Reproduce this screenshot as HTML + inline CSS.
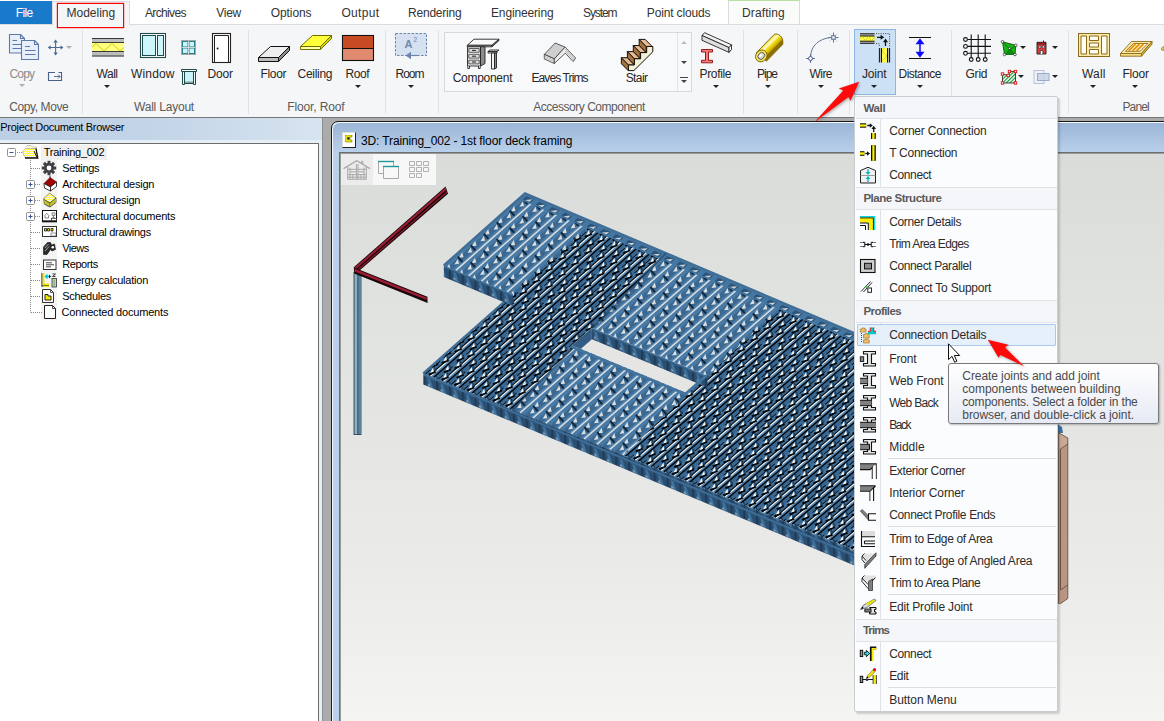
<!DOCTYPE html>
<html lang="en"><head><meta charset="utf-8"><title>Vertex BD - Joint menu</title>
<style>
*{box-sizing:border-box;margin:0;padding:0}
html,body{width:1164px;height:721px;overflow:hidden;background:#fff}
body{position:relative;font-family:"Liberation Sans",sans-serif;font-size:12px;color:#2b2b2b}
.a{position:absolute}
.t{position:absolute;white-space:nowrap;line-height:14px;height:14px}
.c{text-align:center}
#tabs{left:0;top:0;width:1164px;height:24px;background:#fff}
#ribbon{left:0;top:24px;width:1164px;height:93px;background:#f5f6f7;border-top:1px solid #dadbdc}
.tab{position:absolute;top:6px;font-size:12px;line-height:14px;color:#333;white-space:nowrap;letter-spacing:.05px}
.sep{position:absolute;top:30px;width:1px;height:84px;background:#e1e2e3}
.lbl{position:absolute;top:67px;font-size:12px;line-height:14px;color:#262626;white-space:nowrap;text-align:center;letter-spacing:-.1px}
.grp{position:absolute;top:100px;font-size:12px;line-height:14px;color:#5a5a5a;white-space:nowrap;text-align:center;letter-spacing:-.3px}
.dd{position:absolute;width:0;height:0;border-left:3px solid transparent;border-right:3px solid transparent;border-top:3px solid #222}
.tree{position:absolute;font-size:11px;line-height:16px;height:16px;white-space:nowrap;color:#000;letter-spacing:-.2px}
.mi{position:absolute;left:35px;font-size:12px;line-height:14px;color:#2b2b2b;white-space:nowrap;letter-spacing:-.2px}
.mh{position:absolute;left:1px;width:201px;height:23px;background:#f4f6f9;border-bottom:1px solid #dfe2e6;border-top:1px solid #dfe2e6;font-weight:bold;font-size:11.5px;line-height:21px;padding-left:8px;color:#555;letter-spacing:-.35px}
.ms{position:absolute;left:33px;width:168px;height:1px;background:#d9dce0}
.mht{position:absolute;font-weight:bold;font-size:11.5px;line-height:14px;color:#5a5a5a;white-space:nowrap}
.tt{position:absolute;font-size:12px;line-height:14px;color:#4a4a4a;white-space:nowrap}

</style></head><body>
<!-- ===== tabs + ribbon ===== -->
<div class="a" id="tabs"></div><div class="a" id="ribbon"></div>
<div class="a" style="left:0;top:1px;width:52px;height:23px;background:#1979ca"></div>
<div class="a" style="left:52px;top:1px;width:78px;height:24px;background:#f5f6f7;border:1px solid #dadbdc;border-bottom:none"></div>
<div class="a" style="left:57px;top:3px;width:67px;height:25px;border:1px solid #ff0000;box-shadow:0 0 0 .2px #ff0000"></div>
<div class="a" style="left:728px;top:0;width:72px;height:24px;border:1px solid #dadbdc;border-bottom:none;border-top:1px solid #b9e2a0;background:#fafcf9"></div>
<div class="sep" style="left:82px"></div><div class="sep" style="left:248px"></div><div class="sep" style="left:385px"></div>
<div class="sep" style="left:438px"></div><div class="sep" style="left:743px"></div><div class="sep" style="left:797px"></div>
<div class="sep" style="left:849px"></div><div class="sep" style="left:951px"></div><div class="sep" style="left:1068px"></div>
<!-- gallery box -->
<div class="a" style="left:444px;top:32px;width:248px;height:60px;background:#f8f9fa;border:1px solid #d8d9da"></div>
<div class="a" style="left:677px;top:33px;width:1px;height:58px;background:#e2e3e5"></div>
<!-- joint highlight -->
<div class="a" style="left:854px;top:29px;width:42px;height:66px;background:#cde1f6;border:1px solid #8fb6e2"></div>
<!-- labels -->
<!-- tab / ribbon text -->
<div class="tab" style="left:15.8px;top:6px;letter-spacing:-0.648px;color:#fff">File</div>
<div class="tab" style="left:66.5px;top:6px;letter-spacing:-0.000px;">Modeling</div>
<div class="tab" style="left:145px;top:6px;letter-spacing:-0.645px;">Archives</div>
<div class="tab" style="left:216.3px;top:6px;letter-spacing:-0.299px;">View</div>
<div class="tab" style="left:270.7px;top:6px;letter-spacing:-0.077px;">Options</div>
<div class="tab" style="left:341.4px;top:6px;letter-spacing:0.314px;">Output</div>
<div class="tab" style="left:408.1px;top:6px;letter-spacing:-0.234px;">Rendering</div>
<div class="tab" style="left:491px;top:6px;letter-spacing:-0.146px;">Engineering</div>
<div class="tab" style="left:583px;top:6px;letter-spacing:-1.083px;">System</div>
<div class="tab" style="left:646.8px;top:6px;letter-spacing:-0.152px;">Point clouds</div>
<div class="tab" style="left:742.1px;top:6px;letter-spacing:0.096px;">Drafting</div>
<div class="lbl" style="left:9.5px;top:67px;letter-spacing:-0.839px;color:#8c8c8c">Copy</div>
<div class="lbl" style="left:96.5px;top:67px;letter-spacing:-0.464px;">Wall</div>
<div class="lbl" style="left:131px;top:67px;letter-spacing:0.163px;">Window</div>
<div class="lbl" style="left:207.5px;top:67px;letter-spacing:-0.172px;">Door</div>
<div class="lbl" style="left:260.5px;top:67px;letter-spacing:-0.336px;">Floor</div>
<div class="lbl" style="left:297.5px;top:67px;letter-spacing:-0.281px;">Ceiling</div>
<div class="lbl" style="left:345.5px;top:67px;letter-spacing:-0.453px;">Roof</div>
<div class="lbl" style="left:395.5px;top:67px;letter-spacing:-1.005px;">Room</div>
<div class="lbl" style="left:452.7px;top:71px;letter-spacing:-0.281px;">Component</div>
<div class="lbl" style="left:531.5px;top:71px;letter-spacing:-0.902px;">Eaves Trims</div>
<div class="lbl" style="left:625.7px;top:71px;letter-spacing:-0.597px;">Stair</div>
<div class="lbl" style="left:699.5px;top:67px;letter-spacing:-0.336px;">Profile</div>
<div class="lbl" style="left:757px;top:67px;letter-spacing:-1.010px;">Pipe</div>
<div class="lbl" style="left:809.5px;top:67px;letter-spacing:-0.557px;">Wire</div>
<div class="lbl" style="left:862px;top:67px;letter-spacing:-0.215px;">Joint</div>
<div class="lbl" style="left:898.5px;top:67px;letter-spacing:-0.527px;">Distance</div>
<div class="lbl" style="left:965.5px;top:67px;letter-spacing:-0.224px;">Grid</div>
<div class="lbl" style="left:1082px;top:67px;letter-spacing:0.203px;">Wall</div>
<div class="lbl" style="left:1122.5px;top:67px;letter-spacing:-0.211px;">Floor</div>
<div class="grp" style="left:9.3px;top:100px;letter-spacing:-0.416px;">Copy, Move</div>
<div class="grp" style="left:134px;top:100px;letter-spacing:-0.205px;">Wall Layout</div>
<div class="grp" style="left:287.3px;top:100px;letter-spacing:-0.130px;">Floor, Roof</div>
<div class="grp" style="left:533.3px;top:100px;letter-spacing:-0.480px;">Accessory Component</div>
<div class="grp" style="left:1122.5px;top:100px;letter-spacing:-0.901px;">Panel</div>
<!-- dropdown arrows -->
<div class="dd" style="left:19px;top:84px;border-top-color:#b0b0b0"></div>
<div class="dd" style="left:104px;top:85px"></div>
<div class="dd" style="left:355px;top:85px"></div>
<div class="dd" style="left:408px;top:85px"></div>
<div class="dd" style="left:713px;top:85px"></div>
<div class="dd" style="left:765px;top:85px"></div>
<div class="dd" style="left:818px;top:85px"></div>
<div class="dd" style="left:871px;top:85px"></div>
<div class="dd" style="left:917px;top:85px"></div>
<div class="dd" style="left:1090px;top:85px"></div>
<div class="dd" style="left:1132px;top:85px"></div>
<div class="dd" style="left:66px;top:46px;border-top-color:#b0b0b0"></div>
<div class="dd" style="left:1020px;top:46px"></div><div class="dd" style="left:1052px;top:46px"></div>
<div class="dd" style="left:1018px;top:75px"></div><div class="dd" style="left:1052px;top:75px"></div>
<!-- gallery scroll arrows -->
<div class="dd" style="left:681px;top:41px;border-top:none;border-bottom:3px solid #bdbdbd"></div>
<div class="dd" style="left:681px;top:61px;border-top-color:#444"></div>
<div class="a" style="left:680px;top:77px;width:8px;height:1px;background:#444"></div>
<div class="dd" style="left:681px;top:80px;border-top-color:#444"></div>
<!-- ribbon icons -->
<svg class="a" style="left:0;top:26px" width="1164" height="70" viewBox="0 26 1164 70">
<!-- copy -->
<g fill="#e7effb" stroke="#5f78a8" stroke-width="1.1" stroke-linejoin="round">
<path d="M9.5 34.5H20.5L24.5 38.5V53H9.5Z"/><path d="M20.5 34.5V38.5H24.5" fill="none"/>
<path d="M21.5 40.5H34.5L38.5 44.5V59.5H21.5Z"/><path d="M34.5 40.5V44.5H38.5" fill="none"/>
<path d="M12.5 40.5H17M12.5 44.5H21M12.5 48.5H21M25 46.5H30M25 50.5H35.5M25 54.5H35.5" fill="none"/>
</g>
<!-- move -->
<g fill="#4c6a94" stroke="#4c6a94" stroke-width="1.1"><path d="M55.6 41V54M49 47.5H62.2" fill="none"/><path d="M55.6 39.6L53.4 42.4H57.8ZM55.6 55.4L53.4 52.6H57.8ZM47.8 47.5L50.6 45.3V49.7ZM63.4 47.5L60.6 45.3V49.7Z" stroke="none"/></g>
<g fill="none" stroke="#44608c" stroke-width="1.1"><path d="M55 72.5H48.5V80.500H61.5V72.500H58.500"/><path d="M54 76.500H60M58 74.500L60 76.500L58 78.500" stroke-width=".9"/></g>
<!-- wall -->
<rect x="92" y="38" width="32" height="18.500" fill="#bcbcbc"/><rect x="92" y="43" width="32" height="8.500" fill="#ffff80"/>
<path d="M92 38.500H124M92 42.500H124M92 51.500H124M92 56H124" stroke="#3a3a3a" stroke-width="1" fill="none"/>
<path d="M92 47L96 43.500L104 51L112 43.500L120 51L124 47.500" stroke="#c9c900" stroke-width=".9" fill="none"/>
<!-- window -->
<rect x="140.500" y="33.500" width="25" height="24" fill="#fff" stroke="#1f4b4b" stroke-width="1.100"/>
<rect x="142.500" y="35.500" width="13" height="20" fill="#cdf6fc" stroke="#1f4b4b" stroke-width="1"/>
<rect x="157.500" y="35.500" width="6" height="20" fill="#cdf6fc" stroke="#1f4b4b" stroke-width="1"/>
<!-- small window 4 -->
<rect x="181.500" y="40.500" width="14" height="14" fill="#2b7f88" stroke="#a8a8a8" stroke-width="1"/>
<path d="M183 42h4.500v4.500h-4.500zM189.500 42h4.500v4.500h-4.500zM183 48.500h4.500v4.500h-4.500zM189.500 48.500h4.500v4.500h-4.500z" fill="#c8f4fa"/>
<path d="M188.500 41V54M182 47.500H195" stroke="#f0f0f0" stroke-width=".8"/>
<!-- small window bottom -->
<path d="M181.500 69.500H196.500V71.500H181.500Z" fill="#fff" stroke="#1f4b4b" stroke-width="1"/>
<path d="M182.500 71.500V84.500H184.500V71.500M193.500 71.500V84.500H195.500V71.500M184.500 82H193.500M184.500 83.500H193.500" fill="none" stroke="#1f4b4b" stroke-width="1"/>
<rect x="185" y="72" width="8" height="9.500" fill="#c8f4fa"/>
<!-- door -->
<rect x="212.500" y="33.500" width="18" height="29" fill="#fff" stroke="#222" stroke-width="1.100"/>
<path d="M214.500 62.500V35.500H228.500V62.500" fill="none" stroke="#222" stroke-width="1"/><circle cx="217.600" cy="48.600" r="1" fill="#222"/>
<!-- floor -->
<path d="M258.500 57.500L270.500 46.500H289.500L278.500 57.500Z" fill="#eeeeee" stroke="#111" stroke-width="1"/>
<path d="M258.500 57.500H278.500V61.500H258.500Z" fill="#bdbdbd" stroke="#111" stroke-width="1"/>
<path d="M278.500 57.500L289.500 46.500V50.500L278.500 61.500Z" fill="#8a8a8a" stroke="#111" stroke-width="1"/>
<!-- ceiling -->
<path d="M300.500 46.500L312.500 35.500H331.500L320.500 46.500Z" fill="#ffff3a" stroke="#6e6e00" stroke-width="1"/>
<path d="M300.500 46.500H320.500V49.500H300.500Z" fill="#ffffa8" stroke="#6e6e00" stroke-width="1"/>
<path d="M320.500 46.500L331.500 35.500V38.500L320.500 49.500Z" fill="#d8d800" stroke="#6e6e00" stroke-width="1"/>
<!-- roof -->
<rect x="342.500" y="35.500" width="31" height="25" fill="#e08a70" stroke="#111" stroke-width="1.100"/><rect x="343" y="36" width="30" height="12" fill="#c84a24"/><path d="M342.500 48.500H373.500" stroke="#111" stroke-width="1"/>
<!-- room -->
<rect x="395.500" y="33.500" width="31" height="22" fill="#d5e0f0" stroke="#6c84ad" stroke-width="1" stroke-dasharray="2.500 1.500"/>
<path d="M418 55.500H411" stroke="#6c84ad" stroke-width="1.200"/><path d="M405.500 55.500L411 51.800V59.200Z" fill="#6c84ad"/>
<text x="404.500" y="48" font-family="Liberation Sans, sans-serif" font-size="11" font-weight="bold" fill="#7088b0">A</text>
<text x="413.500" y="42" font-family="Liberation Sans, sans-serif" font-size="6.500" fill="#7088b0">2</text>
<!-- component (desk) -->
<g stroke="#222" stroke-width=".9" stroke-linejoin="round">
<path d="M467.300 45.300L474 39.200H499L492 45.300Z" fill="#fafafa"/><path d="M467.300 45.300H492V46.800H467.300Z" fill="#e0e0e0"/><path d="M492 45.300L499 39.200V40.600L492 46.800Z" fill="#999"/>
<path d="M467.500 46.800H480.500V66H467.500Z" fill="#f4f4f4"/><path d="M480.500 46.800H485V63.500L480.500 66Z" fill="#8c8c8c"/>
<path d="M468.800 48.500H479.200V52.300H468.800ZM468.800 54.300H479.200V58.100H468.800ZM468.800 60.100H479.200V63.900H468.800Z" fill="#dcdcdc" stroke-width=".7"/>
<path d="M472 50.400H476M472 56.200H476M472 62H476" stroke-width="1"/>
<path d="M467.800 66V68.500H469.500V66M478.500 66V68.500H480.200V66" fill="#fff"/>
<path d="M488 51.500L490 50H499L497 51.500Z" fill="#fafafa"/><path d="M488 51.500H497V53H488Z" fill="#ddd"/>
<path d="M491.500 53H494.500V69H491.500Z" fill="#f4f4f4"/><path d="M494.500 53H496.500V68L494.500 69Z" fill="#8c8c8c"/>
</g>
<!-- eaves trims -->
<g stroke="#333" stroke-width=".8" stroke-linejoin="round">
<path d="M544.300 54.400L555.200 43L565.100 47.100L554.300 58.900Z" fill="#cfcfcf"/>
<path d="M544.300 54.400L554.300 58.900V63.500L544.300 59Z" fill="#f4f4f4"/>
<path d="M544.300 56L554.300 60.500M544.300 57.500L554.300 62" stroke="#999" stroke-width=".6"/>
<path d="M565.100 47.100L575.600 58L573.200 61.600L565.300 53.200L554.300 63.500V58.900Z" fill="#ececec"/>
<path d="M565.200 49L574.800 59.200M565.300 51L574 60.300" stroke="#999" stroke-width=".6" fill="none"/>
</g>
<!-- stair -->
<g stroke="#1a0f08" stroke-width="1" stroke-linejoin="round">
<path d="M628.4 64.8L628.4 70.6L633.9 70.6L652.8 51.8L652.8 46.5L646.7 46.5L646.7 52.6L640.6 52.6L640.6 58.7L634.5 58.7L634.5 64.8Z" fill="#f1f0da"/>
<path d="M621.4 57.7L628.4 64.8L628.4 70.8L621.4 63.7Z" fill="#a4723f"/>
<path d="M621.4 57.7L627.4 57.7L634.3 64.8L628.4 64.8Z" fill="#e2bb95"/>
<path d="M627.4 51.6L634.3 58.6L634.3 64.7L627.4 57.6Z" fill="#a4723f"/>
<path d="M627.4 51.6L633.3 51.6L640.3 58.6L634.3 58.6Z" fill="#e2bb95"/>
<path d="M633.3 45.5L640.2 52.5L640.2 58.5L633.3 51.5Z" fill="#a4723f"/>
<path d="M633.3 45.5L639.2 45.5L646.2 52.5L640.2 52.5Z" fill="#e2bb95"/>
<path d="M639.2 39.4L646.2 46.5L646.2 52.5L639.2 45.4Z" fill="#a4723f"/>
<path d="M639.2 39.4L645.2 39.4L652.2 46.5L646.2 46.5Z" fill="#e2bb95"/>
</g>
<!-- profile -->
<g stroke="#222" stroke-width=".9" stroke-linejoin="round">
<path d="M702 35.500L704.500 32.700L731.500 44.800L729 47.600Z" fill="#f2f2f2"/><path d="M702 35.500L729 47.600V52.400L702 40.300Z" fill="#dedede"/><path d="M729 47.600L731.500 44.800V49.600L729 52.400Z" fill="#fff"/>
<path d="M701.500 49.500H712.500V52H708.500V60.300H712.500V62.800H701.500V60.300H705.500V52H701.500Z" fill="#f47c7c" stroke="#8a0a0a"/>
</g>
<!-- pipe -->
<defs><linearGradient id="pg" gradientUnits="userSpaceOnUse" x1="764" y1="41" x2="773" y2="50"><stop offset="0" stop-color="#b89a00"/><stop offset=".2" stop-color="#f4dc10"/><stop offset=".45" stop-color="#fffbe0"/><stop offset=".62" stop-color="#f6de18"/><stop offset=".85" stop-color="#d8b800"/><stop offset="1" stop-color="#8a7000"/></linearGradient></defs>
<path d="M756.200 52.900L774.200 34.400C777.500 32.800 783.800 36 782.800 44.300L766.500 61.100Z" fill="url(#pg)" stroke="#7a6400" stroke-width=".9"/>
<ellipse cx="761.300" cy="55.900" rx="5.400" ry="6.200" transform="rotate(42 761.300 55.900)" fill="#f8e860" stroke="#7a6400" stroke-width=".9"/>
<ellipse cx="761.300" cy="55.900" rx="3" ry="3.700" transform="rotate(42 761.300 55.900)" fill="#d8d8d8" stroke="#444" stroke-width=".8"/>
<ellipse cx="760.600" cy="55.300" rx="1.200" ry="1.800" transform="rotate(42 760.600 55.300)" fill="#fff"/>
<!-- wire -->
<g fill="none" stroke="#5f7398" stroke-width="1"><path d="M810.700 56.400C810.700 46 819 38.500 831 37.500"/>
<path d="M810.500 54V63M806 58.500H815" stroke-width="1"/><rect x="808.700" y="56.700" width="3.600" height="3.600" fill="#fdfdfe" transform="rotate(45 810.500 58.500)"/>
<path d="M829.500 33.500L837.500 41.500M837.500 33.500L829.500 41.500" stroke="#b8c4d8" stroke-width=".7"/><path d="M833.500 32.500V42.500M828.500 37.500H838.500" stroke-width="1"/><rect x="831.700" y="35.700" width="3.600" height="3.600" fill="#e4ebf6"/></g>
<!-- joint -->
<rect x="860" y="33.500" width="14.500" height="10" fill="#b8b8b8"/><rect x="860" y="36.200" width="14.500" height="4.800" fill="#ffff50"/>
<path d="M860 33.800H874.500M860 36H874.500M860 41.200H874.500M860 43.300H874.500" stroke="#111" stroke-width="1"/>
<path d="M860 38.600L862.400 36.400L865.400 41L868.400 36.400L871.400 41L874.500 37" stroke="#c4c400" stroke-width=".7" fill="none"/>
<rect x="879" y="48" width="11" height="14.500" fill="#b8b8b8"/><rect x="881.700" y="48" width="5.600" height="14.500" fill="#ffff50"/>
<path d="M879.400 48V62.500M881.500 48V62.500M887.500 48V62.500M889.600 48V62.500" stroke="#111" stroke-width="1"/>
<path d="M884.500 48L882 51L887 56L882 61" stroke="#c4c400" stroke-width=".7" fill="none"/>
<path d="M876 33.600H889.600V47M876 43.600H879.300V46.500" fill="none" stroke="#333" stroke-width=".9" stroke-dasharray="1 1.300"/>
<path d="M877 37.300H882M885.500 46V41" stroke="#111" stroke-width="1.300"/><path d="M884.200 37.300L880.600 34.800V39.800ZM885.500 38.600L883 42.200H888Z" fill="#111"/>
<!-- distance -->
<path d="M909 37.500H931M909 58.500H931" stroke="#111" stroke-width="1.100"/><path d="M920 42V54" stroke="#0a0aff" stroke-width="1.500"/><path d="M920 38.300L915.600 44.200H924.400ZM920 57.700L915.600 51.800H924.400Z" fill="#0a0aff"/>
<!-- grid -->
<g stroke="#111" stroke-width="1.100" fill="#f5f6f7"><path d="M971.200 34.500V57.500M978.200 34.500V57.500M985.200 34.500V57.500M967.500 39.500H991M967.500 46.400H991M967.500 53.300H991" fill="none"/>
<circle cx="971.200" cy="59.500" r="1.900"/><circle cx="978.200" cy="59.500" r="1.900"/><circle cx="985.200" cy="59.500" r="1.900"/><circle cx="965.500" cy="39.500" r="1.900"/><circle cx="965.500" cy="46.400" r="1.900"/><circle cx="965.500" cy="53.300" r="1.900"/></g>
<!-- green shape -->
<path d="M1002.500 41.800L1015.800 45.300L1015 54.500L1004.500 54.500Z" fill="#16b416" stroke="#0a5a0a" stroke-width=".9"/><path d="M1002.500 41.800L1015 54.500M1015.800 45.300L1004.500 54.500" stroke="#0a5a0a" stroke-width=".7"/><path d="M1004.500 54.500L1009.500 48.500L1015 54.500Z" fill="#0c8a0c"/>
<g fill="#fff" stroke="#222" stroke-width=".7"><circle cx="1002.500" cy="41.800" r="1.300"/><circle cx="1015.800" cy="45.300" r="1.300"/><circle cx="1015" cy="54.500" r="1.300"/><circle cx="1004.500" cy="54.500" r="1.300"/><circle cx="1009.500" cy="48.300" r="1.100"/></g>
<!-- red building -->
<path d="M1037 44H1046V54H1037Z" fill="#dc4040" stroke="#1a1a1a" stroke-width=".9"/><path d="M1037 44V42.300H1046V44" fill="#b01818" stroke="#1a1a1a" stroke-width=".9"/><path d="M1043.500 42V40.500" stroke="#1a1a1a"/>
<path d="M1038.800 46h2v2h-2zM1042.300 46h2v2h-2z" fill="#fff" stroke="#1a1a1a" stroke-width=".5"/><path d="M1040.300 54V50.500H1042.800V54" fill="#fff" stroke="#1a1a1a" stroke-width=".6"/>
<!-- hatched -->
<defs><pattern id="hh" width="2.600" height="2.600" patternUnits="userSpaceOnUse" patternTransform="rotate(-45)"><rect width="2.600" height="2.600" fill="#fff"/><rect width="2.600" height="1.200" fill="#1a9a3a"/></pattern></defs>
<path d="M1002.500 74L1008.500 75.500L1009.500 71.500L1015.500 71.500V83H1002.500Z" fill="url(#hh)" stroke="#1a1a1a" stroke-width=".8"/>
<g fill="#fff" stroke="#e01010" stroke-width=".9"><rect x="1001.300" y="72.800" width="2.400" height="2.400"/><rect x="1008.300" y="70.300" width="2.400" height="2.400"/><rect x="1014.300" y="70.300" width="2.400" height="2.400"/><rect x="1014.300" y="81.800" width="2.400" height="2.400"/><rect x="1001.300" y="81.800" width="2.400" height="2.400"/><rect x="1007" y="74.300" width="2.400" height="2.400"/></g>
<!-- overlap rects -->
<rect x="1034" y="70.500" width="10" height="13" fill="#eef2f8" stroke="#b5c2d8" stroke-width="1"/><rect x="1037.500" y="73.500" width="11.500" height="7" fill="#c5d3e8" stroke="#9aaccc" stroke-width="1" fill-opacity=".85"/>
<!-- panel wall -->
<g fill="#fdeaa8" stroke="#8a6a1c" stroke-width="1"><rect x="1078.500" y="33.500" width="31" height="23"/><path d="M1081 36H1086.500V54H1081ZM1101.500 36H1107V54H1101.500ZM1089.500 36H1098.500V40.500H1089.500ZM1089.500 43H1098.500V47H1089.500ZM1089.500 49.500H1098.500V54H1089.500Z" fill="#fffdf4"/></g>
<!-- panel floor -->
<g stroke="#8a6a1c" stroke-width=".9" stroke-linejoin="round"><path d="M1120.500 53.500L1131.500 41.500H1152L1141.500 53.500Z" fill="#fde9a6"/><path d="M1120.500 53.500H1141.500V56.200H1120.500Z" fill="#f8dc80"/><path d="M1141.500 53.500L1152 41.500V44.200L1141.500 56.200Z" fill="#d9b040"/>
<path d="M1125.500 51.300L1133.500 43.500H1148L1140 51.300Z" fill="#fff6d0"/><path d="M1128.500 50.800L1135.500 44M1132.500 50.800L1139.500 44M1136.500 50.800L1143.500 44" stroke="#e8940c" stroke-width="1.800"/></g>
<path d="M1161.500 48L1164 46.500V50.500L1161.500 50Z" fill="#f0d060" stroke="#8a6a1c" stroke-width=".6"/>
</svg>
<!-- ===== workspace backgrounds ===== -->
<div class="a" style="left:0;top:117px;width:1164px;height:604px;background:#ababab"></div>
<div class="a" style="left:0;top:117px;width:1164px;height:1px;background:#777"></div>
<!-- left panel -->
<div class="a" style="left:0;top:118px;width:322px;height:603px;background:#e6eef6"></div>
<div class="a" style="left:0;top:118px;width:322px;height:22px;background:linear-gradient(90deg,#bccfe5,#c4d5e8 50%,#d7e4f0)"></div>
<div class="a" style="left:322px;top:118px;width:1px;height:603px;background:#8c8f93"></div>
<div class="a" style="left:0;top:143px;width:319px;height:578px;background:#fff;border-top:1px solid #6d6d6d;border-right:1px solid #6d6d6d"></div>
<div class="a" style="left:41px;top:145px;width:66px;height:15px;background:#f0f0f0"></div>
<div class="tree" style="left:0.3px;top:119px;letter-spacing:-0.293px;">Project Document Browser</div>
<div class="tree" style="left:43.7px;top:144px;letter-spacing:-0.265px;">Training_002</div>
<div class="tree" style="left:62.2px;top:160px;letter-spacing:-0.350px;">Settings</div>
<div class="tree" style="left:62.2px;top:176px;letter-spacing:-0.232px;">Architectural design</div>
<div class="tree" style="left:62.2px;top:192px;letter-spacing:-0.272px;">Structural design</div>
<div class="tree" style="left:62.2px;top:208px;letter-spacing:-0.218px;">Architectural documents</div>
<div class="tree" style="left:62.2px;top:224px;letter-spacing:-0.286px;">Structural drawings</div>
<div class="tree" style="left:62.2px;top:240px;letter-spacing:-0.514px;">Views</div>
<div class="tree" style="left:62.2px;top:256px;letter-spacing:-0.422px;">Reports</div>
<div class="tree" style="left:62.2px;top:272px;letter-spacing:-0.223px;">Energy calculation</div>
<div class="tree" style="left:62.2px;top:288px;letter-spacing:-0.284px;">Schedules</div>
<div class="tree" style="left:61.6px;top:304px;letter-spacing:-0.182px;">Connected documents</div>
<!-- tree icons -->
<div class="a" style="left:41px;top:160px;width:16px;height:160px;background:#f4f4f4"></div>
<svg class="a" style="left:0;top:144px" width="70" height="180" viewBox="0 144 70 180" shape-rendering="auto">
<g stroke="#8a8a8a" stroke-width="1" stroke-dasharray="1 1" fill="none">
<path d="M17 152.500H22M30.500 160V312.500M31 168.500H41M35 184.500H41M35 200.500H41M35 216.500H41M31 232.500H41M31 248.500H41M31 264.500H41M31 280.500H41M31 296.500H41M31 312.500H43"/></g>
<g fill="#fff" stroke="#919191" stroke-width="1"><rect x="7.500" y="148.500" width="8" height="8" rx="1"/><rect x="26.500" y="180.500" width="8" height="8" rx="1"/><rect x="26.500" y="196.500" width="8" height="8" rx="1"/><rect x="26.500" y="212.500" width="8" height="8" rx="1"/></g>
<path d="M9.500 152.500H13.500M28.500 184.500H32.500M30.500 182.500V186.500M28.500 200.500H32.500M30.500 198.500V202.500M28.500 216.500H32.500M30.500 214.500V218.500" stroke="#3c53a0" stroke-width="1.100"/>
<!-- folder -->
<defs><pattern id="dy" width="2" height="2" patternUnits="userSpaceOnUse"><rect width="2" height="2" fill="#ffff30"/><rect width="1" height="1" fill="#fff"/><rect x="1" y="1" width="1" height="1" fill="#fff"/></pattern></defs>
<path d="M25 147.500L27 145.500H31L32.500 147H36.500V149.500" fill="#fffbd0" stroke="#b8b8b8" stroke-width=".8"/>
<path d="M22.500 152L25.500 148.500H36L37.500 157.500H25Z" fill="url(#dy)" stroke="#a0a0a0" stroke-width=".7"/>
<path d="M36 148.500L37.800 158H25" fill="none" stroke="#111" stroke-width="1.300"/><path d="M34 151L36.800 157" stroke="#111" stroke-width="1"/>
<!-- gear -->
<g transform="translate(49 168)"><g fill="#3f3f3f"><circle r="5"/><rect x="-1.500" y="-7.200" width="3" height="14.400"/><rect x="-7.200" y="-1.500" width="14.400" height="3"/><rect x="-1.500" y="-7.200" width="3" height="14.400" transform="rotate(45)"/><rect x="-1.500" y="-7.200" width="3" height="14.400" transform="rotate(-45)"/></g><circle r="2.400" fill="#fff"/></g>
<!-- arch design house -->
<path d="M44 183.500L50 177.500L56.500 182L50.500 187Z" fill="#a00000" stroke="#5a0000" stroke-width=".6"/><path d="M50 175.500V178" stroke="#333" stroke-width="1"/>
<path d="M44 183.500L50.500 187V191L44.500 188Z" fill="#fff" stroke="#111" stroke-width=".8"/><path d="M50.500 187L56.500 182V186.500L50.500 191Z" fill="#fff" stroke="#111" stroke-width=".8"/>
<!-- structural design -->
<path d="M43.500 199L49.500 193L56 198L50 203Z" fill="url(#dy)" stroke="#6a6a00" stroke-width=".7"/>
<path d="M43.800 199.500L50 203V207L44.300 204Z" fill="#ffff30" stroke="#333" stroke-width=".7"/><path d="M50 203L56 198V202.500L50 207Z" fill="#ffff30" stroke="#333" stroke-width=".7"/>
<path d="M46 201V205.500M48 202V206.500M52 201.500V205.500M54 200V204" stroke="#333" stroke-width=".6"/>
<!-- arch documents -->
<rect x="42.500" y="210.500" width="14" height="10.500" fill="#fff" stroke="#111" stroke-width="1"/><path d="M42 221.500H57" stroke="#111" stroke-width="1.600"/><rect x="51.500" y="218.300" width="5" height="2.400" fill="#fff" stroke="#111" stroke-width=".6"/>
<path d="M45 216V218H48.500V216M44.300 216L46.800 213.300L49.300 216M52 212.800H55V215.300H52ZM53.500 215.500V217.500M52.300 217.500H54.800" fill="none" stroke="#555" stroke-width=".7"/>
<!-- structural drawings -->
<rect x="42.500" y="226.500" width="14" height="10" fill="#fff" stroke="#333" stroke-width="1"/><rect x="51" y="233" width="5" height="3" fill="#fff" stroke="#555" stroke-width=".6"/>
<path d="M44.500 228.500h2v2.500h-2zM47.500 228.500h2v2.500h-2zM51 228.500h2v2.500h-2z" fill="#f0e000" stroke="#111" stroke-width=".8"/>
<!-- views camera -->
<path d="M43.500 247L47.500 242.500H50.500L51.500 245L54.500 244L55.500 249.500L52 251L50.500 249.500L47 254.500H43.500Z" fill="#2a2a2a" stroke="#111" stroke-width=".6"/><path d="M45 248L48.500 244M45 251L49 246.500" stroke="#ddd" stroke-width=".7"/><circle cx="52.800" cy="247.300" r="1.300" fill="#fff"/>
<!-- reports -->
<rect x="43.500" y="260" width="12.500" height="9.500" fill="#fff" stroke="#333" stroke-width="1"/><path d="M46 262.800H52M46 264.800H54M46 266.800H51" stroke="#333" stroke-width=".9"/>
<!-- energy -->
<path d="M42 273V287M42.500 285.500H49" stroke="#111" stroke-width="1"/><path d="M43.500 273V284.500H49" stroke="#f4e800" stroke-width="1.800" fill="none"/><path d="M43 286.500H49" stroke="#f4e800" stroke-width="1"/>
<path d="M45.500 276.500H49.500M47.500 274.500L45.500 276.500L47.500 278.500" stroke="#00c8d8" stroke-width="1.300" fill="none"/><path d="M49 274.500L51 276.500L49 278.500Z" fill="#111"/>
<rect x="52" y="278.500" width="4.500" height="8.500" fill="#b8d8b0" stroke="#333" stroke-width=".8"/><path d="M53.500 281H55M53.500 283H55M53.500 285H55" stroke="#555" stroke-width=".6"/><path d="M52.500 274H55.500L52.500 276.500H55.500" stroke="#111" stroke-width=".8" fill="none"/>
<!-- schedules -->
<path d="M42.500 289.500H50.500L53.500 292.500V302.500H42.500Z" fill="#fff" stroke="#333" stroke-width="1"/><path d="M50.500 289.500V292.500H53.500" fill="none" stroke="#333" stroke-width=".8"/>
<path d="M45 294.500H48V296H51V300H45Z" fill="#f4e800" stroke="#111" stroke-width=".9"/>
<!-- connected documents -->
<path d="M44.500 305.500H52.500L55.500 308.500V318.500H44.500Z" fill="#fff" stroke="#222" stroke-width="1"/><path d="M52.500 305.500V308.500H55.500" fill="none" stroke="#222" stroke-width=".8"/>
</svg>
<!-- ===== MDI child window ===== -->
<div class="a" style="left:331px;top:121px;width:840px;height:610px;background:linear-gradient(#9ab5d6 0px,#a8c1df 14px,#b9d0ea 30px,#bad1eb 100%);border:1px solid #1a1a1a;border-radius:7px 0 0 0;box-shadow:inset 1px 1px 0 #f4f8fc"></div>
<div class="a" style="left:342px;top:132px;width:14px;height:16px;background:#fff;border-right:1px solid #222;border-bottom:1px solid #222;border-left:1px solid #ddd;border-top:1px solid #ddd"></div>
<svg class="a" style="left:345px;top:135px" width="8" height="8" viewBox="0 0 8 8"><path d="M1 0H7V2H5V5H7V7H1L0 6V1Z" fill="#e6e600" stroke="#7a7a00" stroke-width=".6"/><rect x="2.3" y="2.3" width="2.2" height="2.2" fill="#111"/></svg>
<div class="t" style="left:361px;top:134px;letter-spacing:-0.132px;font-size:12px;color:#000">3D: Training_002 - 1st floor deck framing</div>
<div class="a" style="left:339px;top:152px;width:830px;height:580px;background:#6e6e6e"></div><div class="a" style="left:340px;top:153px;width:830px;height:580px;background:#9a9a9a"></div>
<div class="a" id="vp" style="left:341px;top:154px;width:823px;height:567px;background:linear-gradient(#dadcd9 0%,#e1e3e0 30%,#eaeae8 72%,#f4f4f3 100%);overflow:hidden">
<svg class="a" style="left:0;top:0" width="823" height="567" viewBox="341 154 823 567">
<defs>
<clipPath id="cl"><polygon points="525.0,193.3 594.0,222.6 512.8,294.3 443.8,265.5"/><polygon points="666.0,253.2 785.0,303.7 622.7,455.0 512.4,409.8"/></clipPath>
<clipPath id="cd"><polygon points="525.0,193.3 1037.0,410.7 866.3,554.9 423.3,373.3 512.8,294.3 443.8,265.5"/></clipPath>
<g id="sl"><path d="M2.3 -7.2L-1.1 -1.7L3.6 -2.3ZM-2.1 -0.6L-5.5 4.9L-0.8 4.3Z" fill="#d9dee0"/><path d="M-2.8 -2.2L-1.4 -3.4L3.2 1.8L1.8 3.2Z" fill="#13283c"/></g>
<g id="sd"><path d="M-3.8 3.3L3.2 0.3L4.1 2.0L-2.9 5.0Z" fill="#030609"/><path d="M1.4 -3.2L2.6 -3.6L4.6 0.4L3.4 1.0Z" fill="#1d3955"/><path d="M0.9 -2.7L-1.8 2.2L1.7 1.2Z" fill="#f6f6f4"/></g>
<pattern id="pf" width="1" height="1" patternUnits="userSpaceOnUse" patternTransform="matrix(12.800 5.376 0 13 423.3 373.3)"><rect width="1" height="1" fill="#2b4f70"/><rect x="0" y="0" width="1" height=".18" fill="#3d6d97"/><path d="M.3 .25L.55 .25L.8 .95L.62 .95Z" fill="#3f74a3"/><rect x=".0" y=".18" width=".17" height=".82" fill="#1f3b58"/><path d="M.42 .55L.56 .8L.34 .8Z" fill="#8fa9bd"/></pattern>
</defs>
<polygon points="353.6,272 361.4,272 361.4,435 353.6,435" fill="#1d2b36"/>
<rect x="354.4" y="272" width="3" height="162.4" fill="#8fb0c4"/><rect x="357.600" y="272" width="1.300" height="162.400" fill="#4f7a96"/><rect x="359.200" y="272" width="1.600" height="162.400" fill="#6f98b0"/>
<polygon points="353.8,267.2 445.6,186.6 448,193.8 356.6,273" fill="#14080a"/>
<polygon points="354.4,267.8 445.6,187.6 446.4,189.8 355,270" fill="#9c1c33"/>
<polygon points="355.6,271 446.9,191.2 447.4,192.6 356.2,272.2" fill="#86182c"/>
<polygon points="353.8,267.6 427.4,296.8 427.6,303 354.2,273.6" fill="#14080a"/>
<polygon points="354.6,268.8 426.6,297.6 426.6,300 354.6,271.4" fill="#9c1c33"/>
<polygon points="525.0,193.3 1037.0,410.7 866.3,554.9 423.3,373.3 512.8,294.3 443.8,265.5" fill="#3a6790"/>
<polygon points="525.0,193.3 594.0,222.6 512.8,294.3 443.8,265.5" fill="#487aa5"/><polygon points="666.0,253.2 785.0,303.7 622.7,455.0 512.4,409.8" fill="#487aa5"/>
<g clip-path="url(#cd)">
<path d="M525.9 193.7L444.7 265.8M538.7 199.1L457.5 271.2M551.5 204.6L470.3 276.5M564.3 210.0L483.1 281.9M577.1 215.4L495.9 287.2M589.9 220.9L508.7 292.6M602.7 226.3L432.0 376.9M615.5 231.7L444.8 382.1M628.3 237.2L457.6 387.4M641.1 242.6L470.4 392.6M653.9 248.0L483.2 397.9M666.7 253.5L496.0 403.1M679.5 258.9L508.8 408.4M692.3 264.3L521.6 413.6M705.1 269.8L534.4 418.8M717.9 275.2L547.2 424.1M730.7 280.6L560.0 429.3M743.5 286.1L572.8 434.6M756.3 291.5L585.6 439.8M769.1 296.9L598.4 445.1M781.9 302.4L611.2 450.3M794.7 307.8L624.0 455.6M807.5 313.2L636.8 460.8M820.3 318.7L649.6 466.1M833.1 324.1L662.4 471.3M845.9 329.6L675.2 476.6M858.7 335.0L688.0 481.8M871.5 340.4L700.8 487.1M884.3 345.9L713.6 492.3M897.1 351.3L726.4 497.6M909.9 356.7L739.2 502.8M922.7 362.2L752.0 508.1M935.5 367.6L764.8 513.3M948.3 373.0L777.6 518.6M961.1 378.5L790.4 523.8M973.9 383.9L803.2 529.1M986.7 389.3L816.0 534.3M999.5 394.8L828.8 539.6M1012.3 400.2L841.6 544.8M1025.1 405.6L854.4 550.0" stroke="#4b82b2" stroke-width="1.9" fill="none"/>
<path d="M527.4 194.3L446.2 266.5M540.2 199.7L459.0 271.8M553.0 205.2L471.8 277.1M565.8 210.6L484.6 282.5M578.6 216.0L497.4 287.8M591.4 221.5L510.2 293.2M604.2 226.9L433.5 377.5M617.0 232.3L446.3 382.7M629.8 237.8L459.1 388.0M642.6 243.2L471.9 393.2M655.4 248.7L484.7 398.5M668.2 254.1L497.5 403.7M681.0 259.5L510.3 409.0M693.8 265.0L523.1 414.2M706.6 270.4L535.9 419.5M719.4 275.8L548.7 424.7M732.2 281.3L561.5 429.9M745.0 286.7L574.3 435.2M757.8 292.1L587.1 440.4M770.6 297.6L599.9 445.7M783.4 303.0L612.7 450.9M796.2 308.4L625.5 456.2M809.0 313.9L638.3 461.4M821.8 319.3L651.1 466.7M834.6 324.7L663.9 471.9M847.4 330.2L676.7 477.2M860.2 335.6L689.5 482.4M873.0 341.0L702.3 487.7M885.8 346.5L715.1 492.9M898.6 351.9L727.9 498.2M911.4 357.4L740.7 503.4M924.2 362.8L753.5 508.7M937.0 368.2L766.3 513.9M949.8 373.7L779.1 519.2M962.6 379.1L791.9 524.4M975.4 384.5L804.7 529.7M988.2 390.0L817.5 534.9M1001.0 395.4L830.3 540.2M1013.8 400.8L843.1 545.4M1026.6 406.3L855.9 550.7" stroke="#030609" stroke-width="1.4" fill="none"/>
<path d="M536.2 198.1L455.0 270.1M549.0 203.5L467.8 275.5M561.8 208.9L480.6 280.8M574.6 214.4L493.4 286.2M587.4 219.8L506.2 291.5M600.2 225.2L429.5 375.8M613.0 230.7L442.3 381.1M625.8 236.1L455.1 386.3M638.6 241.5L467.9 391.6M651.4 247.0L480.7 396.8M664.2 252.4L493.5 402.1M677.0 257.8L506.3 407.3M689.8 263.3L519.1 412.6M702.6 268.7L531.9 417.8M715.4 274.1L544.7 423.1M728.2 279.6L557.5 428.3M741.0 285.0L570.3 433.6M753.8 290.4L583.1 438.8M766.6 295.9L595.9 444.1M779.4 301.3L608.7 449.3M792.2 306.8L621.5 454.6M805.0 312.2L634.3 459.8M817.8 317.6L647.1 465.1M830.6 323.1L659.9 470.3M843.4 328.5L672.7 475.6M856.2 333.9L685.5 480.8M869.0 339.4L698.3 486.1M881.8 344.8L711.1 491.3M894.6 350.2L723.9 496.5M907.4 355.7L736.7 501.8M920.2 361.1L749.5 507.0M933.0 366.5L762.3 512.3M945.8 372.0L775.1 517.5M958.6 377.4L787.9 522.8M971.4 382.8L800.7 528.0M984.2 388.3L813.5 533.3M997.0 393.7L826.3 538.5M1009.8 399.1L839.1 543.8M1022.6 404.6L851.9 549.0M1035.4 410.0L864.7 554.3" stroke="#030609" stroke-width="1.4" fill="none"/>
<path d="M532.2 196.3L451.0 268.5M545.0 201.8L463.8 273.8M557.8 207.2L476.6 279.2M570.6 212.6L489.4 284.5M583.4 218.1L502.2 289.8M596.2 223.5L425.5 374.2M609.0 229.0L438.3 379.4M621.8 234.4L451.1 384.7M634.6 239.8L463.9 389.9M647.4 245.3L476.7 395.2M660.2 250.7L489.5 400.4M673.0 256.1L502.3 405.7M685.8 261.6L515.1 410.9M698.6 267.0L527.9 416.2M711.4 272.4L540.7 421.4M724.2 277.9L553.5 426.7M737.0 283.3L566.3 431.9M749.8 288.7L579.1 437.2M762.6 294.2L591.9 442.4M775.4 299.6L604.7 447.7M788.2 305.0L617.5 452.9M801.0 310.5L630.3 458.2M813.8 315.9L643.1 463.4M826.6 321.3L655.9 468.7M839.4 326.8L668.7 473.9M852.2 332.2L681.5 479.1M865.0 337.7L694.3 484.4M877.8 343.1L707.1 489.6M890.6 348.5L719.9 494.9M903.4 354.0L732.7 500.1M916.2 359.4L745.5 505.4M929.0 364.8L758.3 510.6M941.8 370.3L771.1 515.9M954.6 375.7L783.9 521.1M967.4 381.1L796.7 526.4M980.2 386.6L809.5 531.6M993.0 392.0L822.3 536.9M1005.8 397.4L835.1 542.1M1018.6 402.9L847.9 547.4M1031.4 408.3L860.7 552.6" stroke="#030609" stroke-width="1.1" stroke-dasharray="8 5" fill="none"/>
<path d="M533.1 196.7L451.9 268.8M545.9 202.2L464.7 274.2M558.7 207.6L477.5 279.5M571.5 213.0L490.3 284.9M584.3 218.5L503.1 290.2M597.1 223.9L426.4 374.6M609.9 229.3L439.2 379.8M622.7 234.8L452.0 385.1M635.5 240.2L464.8 390.3M648.3 245.6L477.6 395.5M661.1 251.1L490.4 400.8M673.9 256.5L503.2 406.0M686.7 261.9L516.0 411.3M699.5 267.4L528.8 416.5M712.3 272.8L541.6 421.8M725.1 278.2L554.4 427.0M737.9 283.7L567.2 432.3M750.7 289.1L580.0 437.5M763.5 294.6L592.8 442.8M776.3 300.0L605.6 448.0M789.1 305.4L618.4 453.3M801.9 310.9L631.2 458.5M814.7 316.3L644.0 463.8M827.5 321.7L656.8 469.0M840.3 327.2L669.6 474.3M853.1 332.6L682.4 479.5M865.9 338.0L695.2 484.8M878.7 343.5L708.0 490.0M891.5 348.9L720.8 495.3M904.3 354.3L733.6 500.5M917.1 359.8L746.4 505.8M929.9 365.2L759.2 511.0M942.7 370.6L772.0 516.3M955.5 376.1L784.8 521.5M968.3 381.5L797.6 526.7M981.1 386.9L810.4 532.0M993.9 392.4L823.2 537.2M1006.7 397.8L836.0 542.5M1019.5 403.2L848.8 547.7M1032.3 408.7L861.6 553.0" stroke="#4b82b2" stroke-width="1.2" fill="none" opacity=".8"/>
<path d="M537.2 198.5L456.0 270.6M550.0 203.9L468.8 275.9M562.8 209.4L481.6 281.3M575.6 214.8L494.4 286.6M588.4 220.2L507.2 292.0M601.2 225.7L430.5 376.3M614.0 231.1L443.3 381.5M626.8 236.5L456.1 386.8M639.6 242.0L468.9 392.0M652.4 247.4L481.7 397.3M665.2 252.8L494.5 402.5M678.0 258.3L507.3 407.7M690.8 263.7L520.1 413.0M703.6 269.1L532.9 418.2M716.4 274.6L545.7 423.5M729.2 280.0L558.5 428.7M742.0 285.4L571.3 434.0M754.8 290.9L584.1 439.2M767.6 296.3L596.9 444.5M780.4 301.8L609.7 449.7M793.2 307.2L622.5 455.0M806.0 312.6L635.3 460.2M818.8 318.1L648.1 465.5M831.6 323.5L660.9 470.7M844.4 328.9L673.7 476.0M857.2 334.4L686.5 481.2M870.0 339.8L699.3 486.5M882.8 345.2L712.1 491.7M895.6 350.7L724.9 497.0M908.4 356.1L737.7 502.2M921.2 361.5L750.5 507.5M934.0 367.0L763.3 512.7M946.8 372.4L776.1 518.0M959.6 377.8L788.9 523.2M972.4 383.3L801.7 528.5M985.2 388.7L814.5 533.7M998.0 394.1L827.3 538.9M1010.8 399.6L840.1 544.2M1023.6 405.0L852.9 549.4M1036.4 410.5L865.7 554.7" stroke="#eeeeeb" stroke-width="1.25" fill="none"/>
<use href="#sd" x="590.4" y="225.3"/><use href="#sd" x="588.1" y="232.8"/><use href="#sd" x="577.4" y="236.8"/><use href="#sd" x="575.1" y="244.3"/><use href="#sd" x="564.4" y="248.3"/><use href="#sd" x="562.1" y="255.8"/><use href="#sd" x="551.4" y="259.7"/><use href="#sd" x="549.1" y="267.2"/><use href="#sd" x="538.4" y="271.2"/><use href="#sd" x="536.1" y="278.7"/><use href="#sd" x="525.4" y="282.7"/><use href="#sd" x="523.1" y="290.2"/><use href="#sd" x="512.4" y="294.2"/><use href="#sd" x="510.1" y="301.7"/><use href="#sd" x="499.4" y="305.6"/><use href="#sd" x="497.1" y="313.1"/><use href="#sd" x="486.4" y="317.1"/><use href="#sd" x="484.1" y="324.6"/><use href="#sd" x="473.4" y="328.6"/><use href="#sd" x="471.1" y="336.1"/><use href="#sd" x="460.4" y="340.1"/><use href="#sd" x="458.1" y="347.6"/><use href="#sd" x="447.4" y="351.6"/><use href="#sd" x="445.1" y="359.0"/><use href="#sd" x="434.4" y="363.0"/><use href="#sd" x="432.1" y="370.5"/><use href="#sd" x="421.4" y="374.5"/><use href="#sd" x="603.2" y="230.7"/><use href="#sd" x="600.9" y="238.3"/><use href="#sd" x="590.2" y="242.2"/><use href="#sd" x="587.9" y="249.7"/><use href="#sd" x="577.2" y="253.7"/><use href="#sd" x="574.9" y="261.2"/><use href="#sd" x="564.2" y="265.1"/><use href="#sd" x="561.9" y="272.6"/><use href="#sd" x="551.2" y="276.6"/><use href="#sd" x="548.9" y="284.1"/><use href="#sd" x="538.2" y="288.0"/><use href="#sd" x="535.9" y="295.5"/><use href="#sd" x="525.2" y="299.5"/><use href="#sd" x="522.9" y="307.0"/><use href="#sd" x="512.2" y="311.0"/><use href="#sd" x="509.9" y="318.5"/><use href="#sd" x="499.2" y="322.4"/><use href="#sd" x="496.9" y="329.9"/><use href="#sd" x="486.2" y="333.9"/><use href="#sd" x="483.9" y="341.4"/><use href="#sd" x="473.2" y="345.4"/><use href="#sd" x="470.9" y="352.8"/><use href="#sd" x="460.2" y="356.8"/><use href="#sd" x="457.9" y="364.3"/><use href="#sd" x="447.2" y="368.3"/><use href="#sd" x="444.9" y="375.8"/><use href="#sd" x="434.2" y="379.8"/><use href="#sd" x="616.0" y="236.2"/><use href="#sd" x="613.7" y="243.7"/><use href="#sd" x="603.0" y="247.6"/><use href="#sd" x="600.7" y="255.1"/><use href="#sd" x="590.0" y="259.1"/><use href="#sd" x="587.7" y="266.6"/><use href="#sd" x="577.0" y="270.5"/><use href="#sd" x="574.7" y="278.0"/><use href="#sd" x="564.0" y="282.0"/><use href="#sd" x="561.7" y="289.5"/><use href="#sd" x="551.0" y="293.4"/><use href="#sd" x="548.7" y="300.9"/><use href="#sd" x="538.0" y="304.9"/><use href="#sd" x="535.7" y="312.3"/><use href="#sd" x="525.0" y="316.3"/><use href="#sd" x="522.7" y="323.8"/><use href="#sd" x="512.0" y="327.8"/><use href="#sd" x="509.7" y="335.2"/><use href="#sd" x="499.0" y="339.2"/><use href="#sd" x="496.7" y="346.7"/><use href="#sd" x="486.0" y="350.7"/><use href="#sd" x="483.7" y="358.1"/><use href="#sd" x="473.0" y="362.1"/><use href="#sd" x="470.7" y="369.6"/><use href="#sd" x="460.0" y="373.6"/><use href="#sd" x="457.7" y="381.0"/><use href="#sd" x="447.0" y="385.0"/><use href="#sd" x="628.8" y="241.6"/><use href="#sd" x="626.5" y="249.1"/><use href="#sd" x="615.8" y="253.0"/><use href="#sd" x="613.5" y="260.5"/><use href="#sd" x="602.8" y="264.5"/><use href="#sd" x="600.5" y="272.0"/><use href="#sd" x="589.8" y="275.9"/><use href="#sd" x="587.5" y="283.4"/><use href="#sd" x="576.8" y="287.3"/><use href="#sd" x="574.5" y="294.8"/><use href="#sd" x="563.8" y="298.8"/><use href="#sd" x="561.5" y="306.3"/><use href="#sd" x="550.8" y="310.2"/><use href="#sd" x="548.5" y="317.7"/><use href="#sd" x="537.8" y="321.6"/><use href="#sd" x="535.5" y="329.1"/><use href="#sd" x="524.8" y="333.1"/><use href="#sd" x="522.5" y="340.5"/><use href="#sd" x="511.8" y="344.5"/><use href="#sd" x="509.5" y="352.0"/><use href="#sd" x="498.8" y="355.9"/><use href="#sd" x="496.5" y="363.4"/><use href="#sd" x="485.8" y="367.4"/><use href="#sd" x="483.5" y="374.8"/><use href="#sd" x="472.8" y="378.8"/><use href="#sd" x="470.5" y="386.3"/><use href="#sd" x="459.8" y="390.2"/><use href="#sd" x="641.6" y="247.0"/><use href="#sd" x="639.3" y="254.5"/><use href="#sd" x="628.6" y="258.4"/><use href="#sd" x="626.3" y="265.9"/><use href="#sd" x="615.6" y="269.9"/><use href="#sd" x="613.3" y="277.4"/><use href="#sd" x="602.6" y="281.3"/><use href="#sd" x="600.3" y="288.8"/><use href="#sd" x="589.6" y="292.7"/><use href="#sd" x="587.3" y="300.2"/><use href="#sd" x="576.6" y="304.1"/><use href="#sd" x="574.3" y="311.6"/><use href="#sd" x="563.6" y="315.5"/><use href="#sd" x="561.3" y="323.0"/><use href="#sd" x="550.6" y="327.0"/><use href="#sd" x="548.3" y="334.4"/><use href="#sd" x="537.6" y="338.4"/><use href="#sd" x="535.3" y="345.9"/><use href="#sd" x="524.6" y="349.8"/><use href="#sd" x="522.3" y="357.3"/><use href="#sd" x="511.6" y="361.2"/><use href="#sd" x="509.3" y="368.7"/><use href="#sd" x="498.6" y="372.7"/><use href="#sd" x="496.3" y="380.1"/><use href="#sd" x="485.6" y="384.1"/><use href="#sd" x="483.3" y="391.5"/><use href="#sd" x="472.6" y="395.5"/><use href="#sd" x="654.4" y="252.5"/><use href="#sd" x="652.1" y="260.0"/><use href="#sd" x="641.4" y="263.9"/><use href="#sd" x="639.1" y="271.4"/><use href="#sd" x="628.4" y="275.3"/><use href="#sd" x="626.1" y="282.8"/><use href="#sd" x="615.4" y="286.7"/><use href="#sd" x="613.1" y="294.2"/><use href="#sd" x="602.4" y="298.1"/><use href="#sd" x="600.1" y="305.6"/><use href="#sd" x="589.4" y="309.5"/><use href="#sd" x="587.1" y="317.0"/><use href="#sd" x="576.4" y="320.9"/><use href="#sd" x="574.1" y="328.4"/><use href="#sd" x="563.4" y="332.3"/><use href="#sd" x="561.1" y="339.8"/><use href="#sd" x="550.4" y="343.7"/><use href="#sd" x="548.1" y="351.2"/><use href="#sd" x="537.4" y="355.1"/><use href="#sd" x="535.1" y="362.6"/><use href="#sd" x="524.4" y="366.5"/><use href="#sd" x="522.1" y="374.0"/><use href="#sd" x="511.4" y="377.9"/><use href="#sd" x="509.1" y="385.4"/><use href="#sd" x="498.4" y="389.3"/><use href="#sd" x="496.1" y="396.8"/><use href="#sd" x="485.4" y="400.7"/><use href="#sd" x="667.2" y="257.9"/><use href="#sd" x="654.2" y="269.3"/><use href="#sd" x="641.2" y="280.7"/><use href="#sd" x="628.2" y="292.1"/><use href="#sd" x="625.9" y="299.5"/><use href="#sd" x="615.2" y="303.5"/><use href="#sd" x="612.9" y="310.9"/><use href="#sd" x="602.2" y="314.8"/><use href="#sd" x="599.9" y="322.3"/><use href="#sd" x="589.2" y="326.2"/><use href="#sd" x="586.9" y="333.7"/><use href="#sd" x="576.2" y="337.6"/><use href="#sd" x="573.9" y="345.1"/><use href="#sd" x="563.2" y="349.0"/><use href="#sd" x="560.9" y="356.5"/><use href="#sd" x="550.2" y="360.4"/><use href="#sd" x="547.9" y="367.9"/><use href="#sd" x="537.2" y="371.8"/><use href="#sd" x="534.9" y="379.2"/><use href="#sd" x="524.2" y="383.2"/><use href="#sd" x="521.9" y="390.6"/><use href="#sd" x="511.2" y="394.6"/><use href="#sd" x="508.9" y="402.0"/><use href="#sd" x="498.2" y="406.0"/><use href="#sd" x="550.0" y="377.1"/><use href="#sd" x="537.0" y="388.5"/><use href="#sd" x="524.0" y="399.9"/><use href="#sd" x="521.7" y="407.3"/><use href="#sd" x="511.0" y="411.2"/><use href="#sd" x="782.4" y="306.8"/><use href="#sd" x="780.1" y="314.2"/><use href="#sd" x="769.4" y="318.0"/><use href="#sd" x="767.1" y="325.5"/><use href="#sd" x="756.4" y="329.3"/><use href="#sd" x="754.1" y="336.7"/><use href="#sd" x="743.4" y="340.6"/><use href="#sd" x="741.1" y="348.0"/><use href="#sd" x="730.4" y="351.8"/><use href="#sd" x="728.1" y="359.2"/><use href="#sd" x="717.4" y="363.1"/><use href="#sd" x="715.1" y="370.5"/><use href="#sd" x="704.4" y="374.4"/><use href="#sd" x="702.1" y="381.7"/><use href="#sd" x="691.4" y="385.6"/><use href="#sd" x="689.1" y="393.0"/><use href="#sd" x="678.4" y="396.9"/><use href="#sd" x="676.1" y="404.3"/><use href="#sd" x="663.1" y="415.5"/><use href="#sd" x="650.1" y="426.8"/><use href="#sd" x="637.1" y="438.0"/><use href="#sd" x="624.1" y="449.3"/><use href="#sd" x="795.2" y="312.2"/><use href="#sd" x="792.9" y="319.6"/><use href="#sd" x="782.2" y="323.5"/><use href="#sd" x="779.9" y="330.9"/><use href="#sd" x="769.2" y="334.7"/><use href="#sd" x="766.9" y="342.1"/><use href="#sd" x="756.2" y="346.0"/><use href="#sd" x="753.9" y="353.4"/><use href="#sd" x="743.2" y="357.2"/><use href="#sd" x="740.9" y="364.6"/><use href="#sd" x="730.2" y="368.5"/><use href="#sd" x="727.9" y="375.8"/><use href="#sd" x="717.2" y="379.7"/><use href="#sd" x="714.9" y="387.1"/><use href="#sd" x="704.2" y="390.9"/><use href="#sd" x="701.9" y="398.3"/><use href="#sd" x="691.2" y="402.2"/><use href="#sd" x="688.9" y="409.6"/><use href="#sd" x="678.2" y="413.4"/><use href="#sd" x="675.9" y="420.8"/><use href="#sd" x="665.2" y="424.7"/><use href="#sd" x="662.9" y="432.1"/><use href="#sd" x="652.2" y="435.9"/><use href="#sd" x="649.9" y="443.3"/><use href="#sd" x="639.2" y="447.2"/><use href="#sd" x="636.9" y="454.6"/><use href="#sd" x="626.2" y="458.4"/><use href="#sd" x="808.0" y="317.6"/><use href="#sd" x="805.7" y="325.0"/><use href="#sd" x="795.0" y="328.9"/><use href="#sd" x="792.7" y="336.3"/><use href="#sd" x="782.0" y="340.1"/><use href="#sd" x="779.7" y="347.5"/><use href="#sd" x="769.0" y="351.3"/><use href="#sd" x="766.7" y="358.7"/><use href="#sd" x="756.0" y="362.6"/><use href="#sd" x="753.7" y="370.0"/><use href="#sd" x="743.0" y="373.8"/><use href="#sd" x="740.7" y="381.2"/><use href="#sd" x="730.0" y="385.0"/><use href="#sd" x="727.7" y="392.4"/><use href="#sd" x="717.0" y="396.3"/><use href="#sd" x="714.7" y="403.7"/><use href="#sd" x="704.0" y="407.5"/><use href="#sd" x="701.7" y="414.9"/><use href="#sd" x="691.0" y="418.8"/><use href="#sd" x="688.7" y="426.1"/><use href="#sd" x="678.0" y="430.0"/><use href="#sd" x="675.7" y="437.3"/><use href="#sd" x="665.0" y="441.2"/><use href="#sd" x="662.7" y="448.6"/><use href="#sd" x="652.0" y="452.5"/><use href="#sd" x="649.7" y="459.8"/><use href="#sd" x="639.0" y="463.7"/><use href="#sd" x="820.8" y="323.1"/><use href="#sd" x="818.5" y="330.5"/><use href="#sd" x="807.8" y="334.3"/><use href="#sd" x="805.5" y="341.7"/><use href="#sd" x="794.8" y="345.5"/><use href="#sd" x="792.5" y="352.9"/><use href="#sd" x="781.8" y="356.7"/><use href="#sd" x="779.5" y="364.1"/><use href="#sd" x="768.8" y="367.9"/><use href="#sd" x="766.5" y="375.3"/><use href="#sd" x="755.8" y="379.2"/><use href="#sd" x="753.5" y="386.5"/><use href="#sd" x="742.8" y="390.4"/><use href="#sd" x="740.5" y="397.8"/><use href="#sd" x="729.8" y="401.6"/><use href="#sd" x="727.5" y="409.0"/><use href="#sd" x="716.8" y="412.8"/><use href="#sd" x="714.5" y="420.2"/><use href="#sd" x="703.8" y="424.1"/><use href="#sd" x="701.5" y="431.4"/><use href="#sd" x="690.8" y="435.3"/><use href="#sd" x="688.5" y="442.6"/><use href="#sd" x="677.8" y="446.5"/><use href="#sd" x="675.5" y="453.8"/><use href="#sd" x="664.8" y="457.7"/><use href="#sd" x="662.5" y="465.1"/><use href="#sd" x="651.8" y="468.9"/><use href="#sd" x="833.6" y="328.5"/><use href="#sd" x="831.3" y="335.9"/><use href="#sd" x="820.6" y="339.7"/><use href="#sd" x="818.3" y="347.1"/><use href="#sd" x="807.6" y="350.9"/><use href="#sd" x="805.3" y="358.3"/><use href="#sd" x="794.6" y="362.1"/><use href="#sd" x="792.3" y="369.5"/><use href="#sd" x="781.6" y="373.3"/><use href="#sd" x="779.3" y="380.7"/><use href="#sd" x="768.6" y="384.5"/><use href="#sd" x="766.3" y="391.9"/><use href="#sd" x="755.6" y="395.7"/><use href="#sd" x="753.3" y="403.1"/><use href="#sd" x="742.6" y="406.9"/><use href="#sd" x="740.3" y="414.3"/><use href="#sd" x="729.6" y="418.2"/><use href="#sd" x="727.3" y="425.5"/><use href="#sd" x="716.6" y="429.4"/><use href="#sd" x="714.3" y="436.7"/><use href="#sd" x="703.6" y="440.6"/><use href="#sd" x="701.3" y="447.9"/><use href="#sd" x="690.6" y="451.8"/><use href="#sd" x="688.3" y="459.1"/><use href="#sd" x="677.6" y="463.0"/><use href="#sd" x="675.3" y="470.3"/><use href="#sd" x="664.6" y="474.2"/><use href="#sd" x="846.4" y="333.9"/><use href="#sd" x="844.1" y="341.3"/><use href="#sd" x="833.4" y="345.1"/><use href="#sd" x="831.1" y="352.5"/><use href="#sd" x="820.4" y="356.3"/><use href="#sd" x="818.1" y="363.7"/><use href="#sd" x="807.4" y="367.5"/><use href="#sd" x="805.1" y="374.9"/><use href="#sd" x="794.4" y="378.7"/><use href="#sd" x="792.1" y="386.1"/><use href="#sd" x="781.4" y="389.9"/><use href="#sd" x="779.1" y="397.3"/><use href="#sd" x="768.4" y="401.1"/><use href="#sd" x="766.1" y="408.4"/><use href="#sd" x="755.4" y="412.3"/><use href="#sd" x="753.1" y="419.6"/><use href="#sd" x="742.4" y="423.5"/><use href="#sd" x="740.1" y="430.8"/><use href="#sd" x="729.4" y="434.7"/><use href="#sd" x="727.1" y="442.0"/><use href="#sd" x="716.4" y="445.9"/><use href="#sd" x="714.1" y="453.2"/><use href="#sd" x="703.4" y="457.0"/><use href="#sd" x="701.1" y="464.4"/><use href="#sd" x="690.4" y="468.2"/><use href="#sd" x="688.1" y="475.6"/><use href="#sd" x="677.4" y="479.4"/><use href="#sd" x="859.2" y="339.4"/><use href="#sd" x="856.9" y="346.7"/><use href="#sd" x="846.2" y="350.5"/><use href="#sd" x="843.9" y="357.9"/><use href="#sd" x="833.2" y="361.7"/><use href="#sd" x="830.9" y="369.1"/><use href="#sd" x="820.2" y="372.9"/><use href="#sd" x="817.9" y="380.3"/><use href="#sd" x="807.2" y="384.1"/><use href="#sd" x="804.9" y="391.4"/><use href="#sd" x="794.2" y="395.3"/><use href="#sd" x="791.9" y="402.6"/><use href="#sd" x="781.2" y="406.4"/><use href="#sd" x="778.9" y="413.8"/><use href="#sd" x="768.2" y="417.6"/><use href="#sd" x="765.9" y="425.0"/><use href="#sd" x="755.2" y="428.8"/><use href="#sd" x="752.9" y="436.1"/><use href="#sd" x="742.2" y="440.0"/><use href="#sd" x="739.9" y="447.3"/><use href="#sd" x="729.2" y="451.1"/><use href="#sd" x="726.9" y="458.5"/><use href="#sd" x="716.2" y="462.3"/><use href="#sd" x="713.9" y="469.7"/><use href="#sd" x="703.2" y="473.5"/><use href="#sd" x="700.9" y="480.8"/><use href="#sd" x="690.2" y="484.7"/><use href="#sd" x="859.0" y="356.0"/><use href="#sd" x="856.7" y="363.3"/><use href="#sd" x="846.0" y="367.1"/><use href="#sd" x="843.7" y="374.5"/><use href="#sd" x="833.0" y="378.3"/><use href="#sd" x="830.7" y="385.6"/><use href="#sd" x="820.0" y="389.4"/><use href="#sd" x="817.7" y="396.8"/><use href="#sd" x="807.0" y="400.6"/><use href="#sd" x="804.7" y="408.0"/><use href="#sd" x="794.0" y="411.8"/><use href="#sd" x="791.7" y="419.1"/><use href="#sd" x="781.0" y="422.9"/><use href="#sd" x="778.7" y="430.3"/><use href="#sd" x="768.0" y="434.1"/><use href="#sd" x="765.7" y="441.4"/><use href="#sd" x="755.0" y="445.3"/><use href="#sd" x="752.7" y="452.6"/><use href="#sd" x="742.0" y="456.4"/><use href="#sd" x="739.7" y="463.8"/><use href="#sd" x="729.0" y="467.6"/><use href="#sd" x="726.7" y="474.9"/><use href="#sd" x="716.0" y="478.8"/><use href="#sd" x="713.7" y="486.1"/><use href="#sd" x="703.0" y="489.9"/><use href="#sd" x="858.8" y="372.5"/><use href="#sd" x="856.5" y="379.9"/><use href="#sd" x="845.8" y="383.7"/><use href="#sd" x="843.5" y="391.0"/><use href="#sd" x="832.8" y="394.8"/><use href="#sd" x="830.5" y="402.2"/><use href="#sd" x="819.8" y="406.0"/><use href="#sd" x="817.5" y="413.3"/><use href="#sd" x="806.8" y="417.1"/><use href="#sd" x="804.5" y="424.5"/><use href="#sd" x="793.8" y="428.3"/><use href="#sd" x="791.5" y="435.6"/><use href="#sd" x="780.8" y="439.4"/><use href="#sd" x="778.5" y="446.7"/><use href="#sd" x="767.8" y="450.6"/><use href="#sd" x="765.5" y="457.9"/><use href="#sd" x="754.8" y="461.7"/><use href="#sd" x="752.5" y="469.0"/><use href="#sd" x="741.8" y="472.9"/><use href="#sd" x="739.5" y="480.2"/><use href="#sd" x="728.8" y="484.0"/><use href="#sd" x="726.5" y="491.3"/><use href="#sd" x="715.8" y="495.2"/><use href="#sd" x="858.6" y="389.1"/><use href="#sd" x="856.3" y="396.4"/><use href="#sd" x="845.6" y="400.2"/><use href="#sd" x="843.3" y="407.5"/><use href="#sd" x="832.6" y="411.3"/><use href="#sd" x="830.3" y="418.7"/><use href="#sd" x="819.6" y="422.5"/><use href="#sd" x="817.3" y="429.8"/><use href="#sd" x="806.6" y="433.6"/><use href="#sd" x="804.3" y="440.9"/><use href="#sd" x="793.6" y="444.7"/><use href="#sd" x="791.3" y="452.1"/><use href="#sd" x="780.6" y="455.9"/><use href="#sd" x="778.3" y="463.2"/><use href="#sd" x="767.6" y="467.0"/><use href="#sd" x="765.3" y="474.3"/><use href="#sd" x="754.6" y="478.1"/><use href="#sd" x="752.3" y="485.5"/><use href="#sd" x="741.6" y="489.3"/><use href="#sd" x="739.3" y="496.6"/><use href="#sd" x="728.6" y="500.4"/><use href="#sd" x="858.4" y="405.6"/><use href="#sd" x="856.1" y="412.9"/><use href="#sd" x="845.4" y="416.7"/><use href="#sd" x="843.1" y="424.0"/><use href="#sd" x="832.4" y="427.8"/><use href="#sd" x="830.1" y="435.1"/><use href="#sd" x="819.4" y="438.9"/><use href="#sd" x="817.1" y="446.3"/><use href="#sd" x="806.4" y="450.1"/><use href="#sd" x="804.1" y="457.4"/><use href="#sd" x="793.4" y="461.2"/><use href="#sd" x="791.1" y="468.5"/><use href="#sd" x="780.4" y="472.3"/><use href="#sd" x="778.1" y="479.6"/><use href="#sd" x="767.4" y="483.4"/><use href="#sd" x="765.1" y="490.7"/><use href="#sd" x="754.4" y="494.5"/><use href="#sd" x="752.1" y="501.8"/><use href="#sd" x="741.4" y="505.7"/><use href="#sd" x="858.2" y="422.1"/><use href="#sd" x="855.9" y="429.4"/><use href="#sd" x="845.2" y="433.2"/><use href="#sd" x="842.9" y="440.5"/><use href="#sd" x="832.2" y="444.3"/><use href="#sd" x="829.9" y="451.6"/><use href="#sd" x="819.2" y="455.4"/><use href="#sd" x="816.9" y="462.7"/><use href="#sd" x="806.2" y="466.5"/><use href="#sd" x="803.9" y="473.8"/><use href="#sd" x="793.2" y="477.6"/><use href="#sd" x="790.9" y="484.9"/><use href="#sd" x="780.2" y="488.7"/><use href="#sd" x="777.9" y="496.0"/><use href="#sd" x="767.2" y="499.8"/><use href="#sd" x="764.9" y="507.1"/><use href="#sd" x="754.2" y="510.9"/><use href="#sd" x="858.0" y="438.5"/><use href="#sd" x="855.7" y="445.8"/><use href="#sd" x="845.0" y="449.6"/><use href="#sd" x="842.7" y="456.9"/><use href="#sd" x="832.0" y="460.7"/><use href="#sd" x="829.7" y="468.0"/><use href="#sd" x="819.0" y="471.8"/><use href="#sd" x="816.7" y="479.1"/><use href="#sd" x="806.0" y="482.9"/><use href="#sd" x="803.7" y="490.2"/><use href="#sd" x="793.0" y="494.0"/><use href="#sd" x="790.7" y="501.3"/><use href="#sd" x="780.0" y="505.1"/><use href="#sd" x="777.7" y="512.3"/><use href="#sd" x="767.0" y="516.2"/><use href="#sd" x="857.8" y="454.9"/><use href="#sd" x="855.5" y="462.2"/><use href="#sd" x="844.8" y="466.0"/><use href="#sd" x="842.5" y="473.3"/><use href="#sd" x="831.8" y="477.1"/><use href="#sd" x="829.5" y="484.4"/><use href="#sd" x="818.8" y="488.2"/><use href="#sd" x="816.5" y="495.4"/><use href="#sd" x="805.8" y="499.2"/><use href="#sd" x="803.5" y="506.5"/><use href="#sd" x="792.8" y="510.3"/><use href="#sd" x="790.5" y="517.6"/><use href="#sd" x="779.8" y="521.4"/><use href="#sd" x="857.6" y="471.3"/><use href="#sd" x="855.3" y="478.6"/><use href="#sd" x="844.6" y="482.4"/><use href="#sd" x="842.3" y="489.7"/><use href="#sd" x="831.6" y="493.5"/><use href="#sd" x="829.3" y="500.7"/><use href="#sd" x="818.6" y="504.5"/><use href="#sd" x="816.3" y="511.8"/><use href="#sd" x="805.6" y="515.6"/><use href="#sd" x="803.3" y="522.9"/><use href="#sd" x="792.6" y="526.7"/><use href="#sd" x="857.4" y="487.7"/><use href="#sd" x="855.1" y="495.0"/><use href="#sd" x="844.4" y="498.7"/><use href="#sd" x="842.1" y="506.0"/><use href="#sd" x="831.4" y="509.8"/><use href="#sd" x="829.1" y="517.1"/><use href="#sd" x="818.4" y="520.8"/><use href="#sd" x="816.1" y="528.1"/><use href="#sd" x="805.4" y="531.9"/><use href="#sd" x="857.2" y="504.0"/><use href="#sd" x="854.9" y="511.3"/><use href="#sd" x="844.2" y="515.1"/><use href="#sd" x="841.9" y="522.3"/><use href="#sd" x="831.2" y="526.1"/><use href="#sd" x="828.9" y="533.4"/><use href="#sd" x="818.2" y="537.1"/><use href="#sd" x="857.0" y="520.3"/><use href="#sd" x="854.7" y="527.6"/><use href="#sd" x="844.0" y="531.4"/><use href="#sd" x="841.7" y="538.6"/><use href="#sd" x="831.0" y="542.4"/><use href="#sd" x="856.8" y="536.6"/><use href="#sd" x="854.5" y="543.9"/><use href="#sd" x="843.8" y="547.6"/><use href="#sd" x="856.6" y="552.9"/>
</g>
<g clip-path="url(#cl)">
<polygon points="525.0,193.3 594.0,222.6 512.8,294.3 443.8,265.5" fill="#487aa5"/><polygon points="666.0,253.2 785.0,303.7 622.7,455.0 512.4,409.8" fill="#487aa5"/>
<path d="M531.4 196.0L450.2 268.1M544.2 201.5L463.0 273.5M557.0 206.9L475.8 278.8M569.8 212.3L488.6 284.2M582.6 217.8L501.4 289.5M595.4 223.2L424.7 373.9M608.2 228.6L437.5 379.1M621.0 234.1L450.3 384.4M633.8 239.5L463.1 389.6M646.6 244.9L475.9 394.9M659.4 250.4L488.7 400.1M672.2 255.8L501.5 405.4M685.0 261.2L514.3 410.6M697.8 266.7L527.1 415.9M710.6 272.1L539.9 421.1M723.4 277.5L552.7 426.4M736.2 283.0L565.5 431.6M749.0 288.4L578.3 436.9M761.8 293.8L591.1 442.1M774.6 299.3L603.9 447.3M787.4 304.7L616.7 452.6M800.2 310.1L629.5 457.8M813.0 315.6L642.3 463.1M825.8 321.0L655.1 468.3M838.6 326.5L667.9 473.6M851.4 331.9L680.7 478.8M864.2 337.3L693.5 484.1M877.0 342.8L706.3 489.3M889.8 348.2L719.1 494.6M902.6 353.6L731.9 499.8M915.4 359.1L744.7 505.1M928.2 364.5L757.5 510.3M941.0 369.9L770.3 515.6M953.8 375.4L783.1 520.8M966.6 380.8L795.9 526.1M979.4 386.2L808.7 531.3M992.2 391.7L821.5 536.6M1005.0 397.1L834.3 541.8M1017.8 402.5L847.1 547.1M1030.6 408.0L859.9 552.3" stroke="#3b6891" stroke-width="5" fill="none"/>
<path d="M536.1 198.0L454.9 270.1M548.9 203.5L467.7 275.5M561.7 208.9L480.5 280.8M574.5 214.3L493.3 286.2M587.3 219.8L506.1 291.5M600.1 225.2L429.4 375.8M612.9 230.6L442.2 381.1M625.7 236.1L455.0 386.3M638.5 241.5L467.8 391.6M651.3 246.9L480.6 396.8M664.1 252.4L493.4 402.1M676.9 257.8L506.2 407.3M689.7 263.2L519.0 412.6M702.5 268.7L531.8 417.8M715.3 274.1L544.6 423.0M728.1 279.6L557.4 428.3M740.9 285.0L570.2 433.5M753.7 290.4L583.0 438.8M766.5 295.9L595.8 444.0M779.3 301.3L608.6 449.3M792.1 306.7L621.4 454.5M804.9 312.2L634.2 459.8M817.7 317.6L647.0 465.0M830.5 323.0L659.8 470.3M843.3 328.5L672.6 475.5M856.1 333.9L685.4 480.8M868.9 339.3L698.2 486.0M881.7 344.8L711.0 491.3M894.5 350.2L723.8 496.5M907.3 355.6L736.6 501.8M920.1 361.1L749.4 507.0M932.9 366.5L762.2 512.3M945.7 371.9L775.0 517.5M958.5 377.4L787.8 522.8M971.3 382.8L800.6 528.0M984.1 388.2L813.4 533.3M996.9 393.7L826.2 538.5M1009.7 399.1L839.0 543.8M1022.5 404.6L851.8 549.0M1035.3 410.0L864.6 554.2" stroke="#9bb5cb" stroke-width=".6" fill="none"/>
<path d="M537.1 198.4L455.9 270.5M549.9 203.9L468.7 275.9M562.7 209.3L481.5 281.2M575.5 214.7L494.3 286.6M588.3 220.2L507.1 291.9M601.1 225.6L430.4 376.2M613.9 231.0L443.2 381.5M626.7 236.5L456.0 386.7M639.5 241.9L468.8 392.0M652.3 247.3L481.6 397.2M665.1 252.8L494.4 402.4M677.9 258.2L507.2 407.7M690.7 263.7L520.0 412.9M703.5 269.1L532.8 418.2M716.3 274.5L545.6 423.4M729.1 280.0L558.4 428.7M741.9 285.4L571.2 433.9M754.7 290.8L584.0 439.2M767.5 296.3L596.8 444.4M780.3 301.7L609.6 449.7M793.1 307.1L622.4 454.9M805.9 312.6L635.2 460.2M818.7 318.0L648.0 465.4M831.5 323.4L660.8 470.7M844.3 328.9L673.6 475.9M857.1 334.3L686.4 481.2M869.9 339.7L699.2 486.4M882.7 345.2L712.0 491.7M895.5 350.6L724.8 496.9M908.3 356.0L737.6 502.2M921.1 361.5L750.4 507.4M933.9 366.9L763.2 512.7M946.7 372.4L776.0 517.9M959.5 377.8L788.8 523.2M972.3 383.2L801.6 528.4M985.1 388.7L814.4 533.6M997.9 394.1L827.2 538.9M1010.7 399.5L840.0 544.1M1023.5 405.0L852.8 549.4M1036.3 410.4L865.6 554.6" stroke="#e2e4e4" stroke-width="1.3" fill="none"/>
<use href="#sl" x="524.9" y="201.8"/><use href="#sl" x="511.9" y="213.3"/><use href="#sl" x="498.9" y="224.9"/><use href="#sl" x="485.9" y="236.4"/><use href="#sl" x="472.9" y="248.0"/><use href="#sl" x="459.9" y="259.5"/><use href="#sl" x="446.9" y="271.1"/><use href="#sl" x="433.9" y="282.6"/><use href="#sl" x="420.9" y="294.2"/><use href="#sl" x="407.9" y="305.7"/><use href="#sl" x="394.9" y="317.3"/><use href="#sl" x="381.9" y="328.8"/><use href="#sl" x="368.9" y="340.4"/><use href="#sl" x="537.7" y="207.2"/><use href="#sl" x="524.7" y="218.8"/><use href="#sl" x="511.7" y="230.3"/><use href="#sl" x="498.7" y="241.8"/><use href="#sl" x="485.7" y="253.3"/><use href="#sl" x="472.7" y="264.9"/><use href="#sl" x="459.7" y="276.4"/><use href="#sl" x="446.7" y="287.9"/><use href="#sl" x="433.7" y="299.5"/><use href="#sl" x="420.7" y="311.0"/><use href="#sl" x="407.7" y="322.5"/><use href="#sl" x="394.7" y="334.1"/><use href="#sl" x="381.7" y="345.6"/><use href="#sl" x="550.5" y="212.6"/><use href="#sl" x="537.5" y="224.2"/><use href="#sl" x="524.5" y="235.7"/><use href="#sl" x="511.5" y="247.2"/><use href="#sl" x="498.5" y="258.7"/><use href="#sl" x="485.5" y="270.2"/><use href="#sl" x="472.5" y="281.8"/><use href="#sl" x="459.5" y="293.3"/><use href="#sl" x="446.5" y="304.8"/><use href="#sl" x="433.5" y="316.3"/><use href="#sl" x="420.5" y="327.8"/><use href="#sl" x="407.5" y="339.3"/><use href="#sl" x="394.5" y="350.9"/><use href="#sl" x="563.3" y="218.1"/><use href="#sl" x="550.3" y="229.6"/><use href="#sl" x="537.3" y="241.1"/><use href="#sl" x="524.3" y="252.6"/><use href="#sl" x="511.3" y="264.1"/><use href="#sl" x="498.3" y="275.6"/><use href="#sl" x="485.3" y="287.1"/><use href="#sl" x="472.3" y="298.6"/><use href="#sl" x="459.3" y="310.1"/><use href="#sl" x="446.3" y="321.6"/><use href="#sl" x="433.3" y="333.1"/><use href="#sl" x="420.3" y="344.6"/><use href="#sl" x="407.3" y="356.1"/><use href="#sl" x="576.1" y="223.5"/><use href="#sl" x="563.1" y="235.0"/><use href="#sl" x="550.1" y="246.5"/><use href="#sl" x="537.1" y="258.0"/><use href="#sl" x="524.1" y="269.5"/><use href="#sl" x="511.1" y="281.0"/><use href="#sl" x="498.1" y="292.4"/><use href="#sl" x="485.1" y="303.9"/><use href="#sl" x="472.1" y="315.4"/><use href="#sl" x="459.1" y="326.9"/><use href="#sl" x="446.1" y="338.4"/><use href="#sl" x="433.1" y="349.9"/><use href="#sl" x="420.1" y="361.4"/><use href="#sl" x="588.9" y="228.9"/><use href="#sl" x="575.9" y="240.4"/><use href="#sl" x="562.9" y="251.9"/><use href="#sl" x="549.9" y="263.4"/><use href="#sl" x="536.9" y="274.8"/><use href="#sl" x="523.9" y="286.3"/><use href="#sl" x="510.9" y="297.8"/><use href="#sl" x="665.7" y="261.5"/><use href="#sl" x="652.7" y="272.9"/><use href="#sl" x="639.7" y="284.3"/><use href="#sl" x="626.7" y="295.7"/><use href="#sl" x="613.7" y="307.1"/><use href="#sl" x="600.7" y="318.4"/><use href="#sl" x="587.7" y="329.8"/><use href="#sl" x="574.7" y="341.2"/><use href="#sl" x="561.7" y="352.6"/><use href="#sl" x="548.7" y="364.0"/><use href="#sl" x="678.5" y="266.9"/><use href="#sl" x="665.5" y="278.3"/><use href="#sl" x="652.5" y="289.7"/><use href="#sl" x="639.5" y="301.1"/><use href="#sl" x="626.5" y="312.4"/><use href="#sl" x="613.5" y="323.8"/><use href="#sl" x="600.5" y="335.2"/><use href="#sl" x="587.5" y="346.6"/><use href="#sl" x="574.5" y="357.9"/><use href="#sl" x="561.5" y="369.3"/><use href="#sl" x="548.5" y="380.7"/><use href="#sl" x="535.5" y="392.1"/><use href="#sl" x="522.5" y="403.4"/><use href="#sl" x="691.3" y="272.4"/><use href="#sl" x="678.3" y="283.7"/><use href="#sl" x="665.3" y="295.1"/><use href="#sl" x="652.3" y="306.4"/><use href="#sl" x="639.3" y="317.8"/><use href="#sl" x="626.3" y="329.2"/><use href="#sl" x="613.3" y="340.5"/><use href="#sl" x="600.3" y="351.9"/><use href="#sl" x="587.3" y="363.2"/><use href="#sl" x="574.3" y="374.6"/><use href="#sl" x="561.3" y="386.0"/><use href="#sl" x="548.3" y="397.3"/><use href="#sl" x="535.3" y="408.7"/><use href="#sl" x="704.1" y="277.8"/><use href="#sl" x="691.1" y="289.1"/><use href="#sl" x="678.1" y="300.5"/><use href="#sl" x="665.1" y="311.8"/><use href="#sl" x="652.1" y="323.2"/><use href="#sl" x="639.1" y="334.5"/><use href="#sl" x="626.1" y="345.9"/><use href="#sl" x="613.1" y="357.2"/><use href="#sl" x="600.1" y="368.6"/><use href="#sl" x="587.1" y="379.9"/><use href="#sl" x="574.1" y="391.3"/><use href="#sl" x="561.1" y="402.6"/><use href="#sl" x="548.1" y="413.9"/><use href="#sl" x="716.9" y="283.2"/><use href="#sl" x="703.9" y="294.5"/><use href="#sl" x="690.9" y="305.9"/><use href="#sl" x="677.9" y="317.2"/><use href="#sl" x="664.9" y="328.5"/><use href="#sl" x="651.9" y="339.9"/><use href="#sl" x="638.9" y="351.2"/><use href="#sl" x="625.9" y="362.5"/><use href="#sl" x="612.9" y="373.9"/><use href="#sl" x="599.9" y="385.2"/><use href="#sl" x="586.9" y="396.5"/><use href="#sl" x="573.9" y="407.9"/><use href="#sl" x="560.9" y="419.2"/><use href="#sl" x="729.7" y="288.6"/><use href="#sl" x="716.7" y="300.0"/><use href="#sl" x="703.7" y="311.3"/><use href="#sl" x="690.7" y="322.6"/><use href="#sl" x="677.7" y="333.9"/><use href="#sl" x="664.7" y="345.2"/><use href="#sl" x="651.7" y="356.5"/><use href="#sl" x="638.7" y="367.9"/><use href="#sl" x="625.7" y="379.2"/><use href="#sl" x="612.7" y="390.5"/><use href="#sl" x="599.7" y="401.8"/><use href="#sl" x="586.7" y="413.1"/><use href="#sl" x="573.7" y="424.5"/><use href="#sl" x="742.5" y="294.1"/><use href="#sl" x="729.5" y="305.4"/><use href="#sl" x="716.5" y="316.7"/><use href="#sl" x="703.5" y="328.0"/><use href="#sl" x="690.5" y="339.3"/><use href="#sl" x="677.5" y="350.6"/><use href="#sl" x="664.5" y="361.9"/><use href="#sl" x="651.5" y="373.2"/><use href="#sl" x="638.5" y="384.5"/><use href="#sl" x="625.5" y="395.8"/><use href="#sl" x="612.5" y="407.1"/><use href="#sl" x="599.5" y="418.4"/><use href="#sl" x="586.5" y="429.7"/><use href="#sl" x="755.3" y="299.5"/><use href="#sl" x="742.3" y="310.8"/><use href="#sl" x="729.3" y="322.1"/><use href="#sl" x="716.3" y="333.4"/><use href="#sl" x="703.3" y="344.7"/><use href="#sl" x="690.3" y="355.9"/><use href="#sl" x="677.3" y="367.2"/><use href="#sl" x="664.3" y="378.5"/><use href="#sl" x="651.3" y="389.8"/><use href="#sl" x="638.3" y="401.1"/><use href="#sl" x="625.3" y="412.4"/><use href="#sl" x="612.3" y="423.7"/><use href="#sl" x="599.3" y="435.0"/><use href="#sl" x="768.1" y="304.9"/><use href="#sl" x="755.1" y="316.2"/><use href="#sl" x="742.1" y="327.5"/><use href="#sl" x="729.1" y="338.7"/><use href="#sl" x="716.1" y="350.0"/><use href="#sl" x="703.1" y="361.3"/><use href="#sl" x="690.1" y="372.6"/><use href="#sl" x="677.1" y="383.9"/><use href="#sl" x="664.1" y="395.1"/><use href="#sl" x="651.1" y="406.4"/><use href="#sl" x="638.1" y="417.7"/><use href="#sl" x="625.1" y="429.0"/><use href="#sl" x="612.1" y="440.2"/><use href="#sl" x="780.9" y="310.3"/><use href="#sl" x="767.9" y="321.6"/><use href="#sl" x="754.9" y="332.9"/><use href="#sl" x="741.9" y="344.1"/><use href="#sl" x="728.9" y="355.4"/><use href="#sl" x="715.9" y="366.7"/><use href="#sl" x="702.9" y="377.9"/><use href="#sl" x="689.9" y="389.2"/><use href="#sl" x="676.9" y="400.4"/><use href="#sl" x="663.9" y="411.7"/><use href="#sl" x="650.9" y="423.0"/><use href="#sl" x="637.9" y="434.2"/><use href="#sl" x="624.9" y="445.5"/>
</g>
<polygon points="525.0,193.3 1037.0,410.7 1030.5,416.2 518.5,199.1" fill="#4577a3"/>
<path d="M526.4 196.3L534.0 199.5L530.4 202.7L522.8 199.5ZM539.2 201.7L546.8 204.9L543.2 208.1L535.6 204.9ZM552.0 207.1L559.6 210.3L556.0 213.5L548.4 210.3ZM564.8 212.6L572.4 215.8L568.8 219.0L561.2 215.7ZM577.6 218.0L585.2 221.2L581.6 224.4L574.0 221.2ZM590.4 223.4L598.0 226.6L594.4 229.8L586.8 226.6ZM603.2 228.9L610.8 232.1L607.2 235.3L599.6 232.0ZM616.0 234.3L623.6 237.5L620.0 240.7L612.4 237.5ZM628.8 239.7L636.4 242.9L632.8 246.1L625.2 242.9ZM641.6 245.2L649.2 248.4L645.6 251.5L638.0 248.3ZM654.4 250.6L662.0 253.8L658.4 257.0L650.8 253.7ZM667.2 256.0L674.8 259.2L671.2 262.4L663.6 259.2ZM680.0 261.5L687.6 264.7L684.0 267.8L676.4 264.6ZM692.8 266.9L700.4 270.1L696.8 273.3L689.2 270.0ZM705.6 272.3L713.2 275.5L709.6 278.7L702.0 275.5ZM718.4 277.8L726.0 281.0L722.4 284.1L714.8 280.9ZM731.2 283.2L738.8 286.4L735.2 289.5L727.6 286.3ZM744.0 288.6L751.6 291.8L748.0 295.0L740.4 291.7ZM756.8 294.1L764.4 297.3L760.8 300.4L753.2 297.2ZM769.6 299.5L777.2 302.7L773.6 305.8L766.0 302.6ZM782.4 304.9L790.0 308.1L786.4 311.3L778.8 308.0ZM795.2 310.3L802.8 313.6L799.2 316.7L791.6 313.5ZM808.0 315.8L815.6 319.0L812.0 322.1L804.4 318.9ZM820.8 321.2L828.4 324.4L824.8 327.5L817.2 324.3ZM833.6 326.6L841.2 329.9L837.6 333.0L830.0 329.8ZM846.4 332.1L854.0 335.3L850.4 338.4L842.8 335.2ZM859.2 337.5L866.8 340.7L863.2 343.8L855.6 340.6Z" fill="#2c5479"/>
<path d="M532.4 199.3L529.6 201.8L525.0 199.9ZM545.2 204.8L542.4 207.2L537.8 205.3ZM558.0 210.2L555.2 212.7L550.6 210.7ZM570.8 215.6L568.0 218.1L563.4 216.2ZM583.6 221.1L580.8 223.5L576.2 221.6ZM596.4 226.5L593.6 229.0L589.0 227.0ZM609.2 231.9L606.4 234.4L601.8 232.4ZM622.0 237.4L619.2 239.8L614.6 237.9ZM634.8 242.8L632.0 245.3L627.4 243.3ZM647.6 248.2L644.8 250.7L640.2 248.7ZM660.4 253.7L657.6 256.1L653.0 254.2ZM673.2 259.1L670.4 261.5L665.8 259.6ZM686.0 264.5L683.2 267.0L678.6 265.0ZM698.8 270.0L696.0 272.4L691.4 270.4ZM711.6 275.4L708.8 277.8L704.2 275.9ZM724.4 280.8L721.6 283.3L717.0 281.3ZM737.2 286.2L734.4 288.7L729.8 286.7ZM750.0 291.7L747.2 294.1L742.6 292.2ZM762.8 297.1L760.0 299.5L755.4 297.6ZM775.6 302.5L772.8 305.0L768.2 303.0ZM788.4 308.0L785.6 310.4L781.0 308.5ZM801.2 313.4L798.4 315.8L793.8 313.9ZM814.0 318.8L811.2 321.3L806.6 319.3ZM826.8 324.3L824.0 326.7L819.4 324.7ZM839.6 329.7L836.8 332.1L832.2 330.2ZM852.4 335.1L849.6 337.6L845.0 335.6ZM865.2 340.6L862.4 343.0L857.8 341.0Z" fill="#c9d2d8"/>
<polyline points="443.8,265.5 525.0,193.3 1037.0,410.7" fill="none" stroke="#406e96" stroke-width="2.4"/>
<polyline points="512.8,294.3 423.3,373.3" fill="none" stroke="#406e96" stroke-width="2.4"/>
<line x1="666.0" y1="253.2" x2="512.5" y2="409.9" stroke="#213f5e" stroke-width="2" opacity=".55"/>
<clipPath id="hc"><polygon points="591.9,327.7 705.5,375.2 685.5,392.5 571.9,345.2"/></clipPath>
<polygon points="591.9,327.7 705.5,375.2 685.5,392.5 571.9,345.2" fill="#e5e6e4"/>
<polygon clip-path="url(#hc)" points="591.9,327.7 571.9,345.2 571.9,356.7 591.9,339.2" fill="#335c84"/>
<polygon points="591.9,327.7 707.5,376.0 707.5,387.5 591.9,339.2" fill="url(#pf)" />
<polyline points="570.7,346.3 685.3,393.9 706.5,375.6" fill="none" stroke="#44749e" stroke-width="2.6"/>
<polygon points="423.3,373.3 866.3,554.9 866.3,570.5 423.3,384.5" fill="url(#pf)"/>
<polygon points="443.8,265.5 512.8,294.3 512.8,305.9 443.8,277.1" fill="url(#pf)"/>
<polygon points="1057,424 1062,427 1063,433 1057,433" fill="#3f6f98"/>
<polygon points="1058,432.5 1067.8,438 1067.8,598.5 1060,604 1058,604" fill="#b89683"/>
<polygon points="1058,432.5 1067.8,438 1067.8,444 1060.5,449 1058,449" fill="#c9a896"/>
<path d="M1060.5 449V590M1058.6 433V604M1060.5 449L1067.8 444M1060.5 590L1067.8 585M1058 432.5L1067.8 438V598.500L1060 604" fill="none" stroke="#5c473c" stroke-width=".8"/>
</svg>
</div>
<!-- viewport toolbar -->
<div class="a" style="left:341px;top:154px;width:96px;height:32px;background:#f7f7f7;border-right:1px solid #dcdcdc;border-bottom:1px solid #dcdcdc"></div>
<div class="a" style="left:341px;top:154px;width:32px;height:31px;background:#ececec"></div>
<svg class="a" style="left:341px;top:154px" width="96" height="32" viewBox="341 154 96 32" fill="none" stroke="#a9a9a9" stroke-width="1">
<path d="M343.5 168.6L356.8 160.8L370 168.6" stroke-width="1.3"/><path d="M361.5 163.2V161.2H362.8V164"/>
<path d="M347.7 167V179.3H366.3V167M347.7 177.2H366.3M347.7 174.6H366.3M347.7 169.3H366.3M356.4 164V179M358 164V179M350 167.5V179M364 167.5V179M352.8 174.6V179M361 174.6V179M350 171.8H356M358 171.8H364"/>
<path d="M378.5 161.5H393.5V173.5H378.5Z" fill="#f8f8f8"/><path d="M378 161.5H394" stroke="#1f9a98" stroke-width="1.4"/>
<path d="M383.5 166.5H398.5V178.5H383.5Z" fill="#f8f8f8"/><path d="M383 166.5H399" stroke="#1f9a98" stroke-width="1.4"/>
<g stroke="#b2b2b2" stroke-width="1"><path d="M409.5 161.5h5v4h-5zM416.5 161.5h5v4h-5zM423.5 161.5h5v4h-5zM409.5 167.5h5v4h-5zM416.5 167.5h5v4h-5zM423.5 167.5h5v4h-5zM409.5 173.5h5v4h-5zM416.5 173.5h5v4h-5z"/></g>
</svg>

<!-- ===== dropdown menu ===== -->
<div class="a" id="menu" style="left:854px;top:96px;width:204px;height:616px;background:#fbfcfd;border:1px solid #c9ccd0;border-radius:2px;box-shadow:2px 2px 2px rgba(0,0,0,.16)">
<div class="a" style="left:0;top:1px">
<div class="a" style="left:25px;top:21px;width:1px;height:592px;background:#dfe2e6"></div>
<div class="mh" style="top:-1px;height:22px;border-top:none"></div><div class="mht" style="left:8.4px;top:3px;letter-spacing:-0.306px;">Wall</div>
<div class="mi" style="left:34.2px;top:26px;letter-spacing:-0.208px;">Corner Connection</div>
<div class="mi" style="left:34.2px;top:48px;letter-spacing:-0.260px;">T Connection</div>
<div class="mi" style="left:34.2px;top:70px;letter-spacing:-0.367px;">Connect</div>
<div class="mh" style="top:89px"></div><div class="mht" style="left:8.4px;top:93px;letter-spacing:-0.464px;">Plane Structure</div>
<div class="mi" style="left:34.2px;top:117px;letter-spacing:-0.346px;">Corner Details</div>
<div class="mi" style="left:34.2px;top:139px;letter-spacing:-0.630px;">Trim Area Edges</div>
<div class="mi" style="left:34.2px;top:161px;letter-spacing:-0.378px;">Connect Parallel</div>
<div class="mi" style="left:34.2px;top:183px;letter-spacing:-0.215px;">Connect To Support</div>
<div class="mh" style="top:202px"></div><div class="mht" style="left:8.4px;top:206px;letter-spacing:-0.555px;">Profiles</div>
<div class="a" style="left:2px;top:226px;width:199px;height:22px;background:#e6f0fb;border:1px solid #a9c9ee;border-radius:1px"></div>
<div class="mi" style="left:34.2px;top:230px;letter-spacing:-0.196px;">Connection Details</div>
<div class="mi" style="left:34.2px;top:254px;letter-spacing:-0.129px;">Front</div>
<div class="mi" style="left:34.2px;top:276px;letter-spacing:-0.189px;">Web Front</div>
<div class="mi" style="left:34.2px;top:298px;letter-spacing:-0.710px;">Web Back</div>
<div class="mi" style="left:34.2px;top:320px;letter-spacing:-1.429px;">Back</div>
<div class="mi" style="left:34.2px;top:342px;letter-spacing:0.028px;">Middle</div>
<div class="ms" style="top:360px"></div>
<div class="mi" style="left:34.2px;top:366px;letter-spacing:-0.361px;">Exterior Corner</div>
<div class="mi" style="left:34.2px;top:388px;letter-spacing:-0.120px;">Interior Corner</div>
<div class="mi" style="left:34.2px;top:410px;letter-spacing:-0.339px;">Connect Profile Ends</div>
<div class="ms" style="top:428px"></div>
<div class="mi" style="left:34.2px;top:434px;letter-spacing:-0.327px;">Trim to Edge of Area</div>
<div class="mi" style="left:34.2px;top:456px;letter-spacing:-0.244px;">Trim to Edge of Angled Area</div>
<div class="mi" style="left:34.2px;top:478px;letter-spacing:-0.443px;">Trim to Area Plane</div>
<div class="ms" style="top:496px"></div>
<div class="mi" style="left:34.2px;top:502px;letter-spacing:-0.189px;">Edit Profile Joint</div>
<div class="mh" style="top:521px"></div><div class="mht" style="left:7.9px;top:525px;letter-spacing:-0.922px;">Trims</div>
<div class="mi" style="left:34.2px;top:549px;letter-spacing:-0.367px;">Connect</div>
<div class="mi" style="left:34.2px;top:571px;letter-spacing:-0.329px;">Edit</div>
<div class="ms" style="top:589px"></div>
<div class="mi" style="left:34.2px;top:595px;letter-spacing:-0.055px;">Button Menu</div>
<svg class="a" style="left:0;top:0" width="28" height="614" viewBox="855 98 28 614">
<!-- corner connection -->
<rect x="860" y="123.300" width="6.200" height="4.400" fill="#111"/><rect x="860" y="124.400" width="6.200" height="2.200" fill="#ffee00"/>
<path d="M867.300 125.500H871M873.700 132V128" stroke="#111" stroke-width="1.300"/><path d="M872.800 125.500L869.800 123.200V127.800ZM873.700 125.800L871.400 129H876Z" fill="#111"/>
<rect x="871" y="133" width="4.800" height="6" fill="#111"/><rect x="872.200" y="133" width="2.400" height="6" fill="#ffee00"/>
<!-- T connection -->
<rect x="860" y="151.200" width="4.400" height="4.600" fill="#111"/><rect x="860" y="152.300" width="4.400" height="2.400" fill="#ffee00"/>
<path d="M865.300 153.500H868" stroke="#111" stroke-width="1.300"/><path d="M870 153.500L867 151.200V155.800Z" fill="#111"/>
<rect x="871" y="145.200" width="4.800" height="15.600" fill="#111"/><rect x="872.300" y="145.200" width="2.200" height="15.600" fill="#ffee00"/>
<!-- connect -->
<path d="M860.500 183V170.500L868 167.300L875.500 170.500V183Z" fill="#f1f1f1" stroke="#222" stroke-width="1"/><path d="M860.500 175.500H875.500" stroke="#888" stroke-width=".8"/>
<path d="M868 169V174M868 182V177" stroke="#00a8b0" stroke-width="1.200"/><path d="M868 175L865.500 172H870.500ZM868 176L865.500 179H870.500Z" fill="#00b8c0"/>
<!-- corner details -->
<rect x="860" y="217.500" width="13.500" height="5" fill="#ffee00"/><rect x="868.500" y="217.500" width="5" height="12.500" fill="#ffee00"/>
<path d="M860 216.700H875.200M874.700 216.700V230" stroke="#00d8e8" stroke-width="1.200" fill="none"/>
<path d="M860 217.900H873.400V230" stroke="#111" stroke-width=".9" fill="none"/>
<path d="M860 223H868.300V230M860 225.500H865.500V230" stroke="#111" stroke-width="1" fill="none"/>
<!-- trim area edges -->
<path d="M860 242.500H864M860 246.500H864M876 242.500H872M876 246.500H872" stroke="#777" stroke-width="1" fill="none"/>
<path d="M863 242.300H864.800V246.700H863M873 242.300H871.200V246.700H873M864.800 244.500H871.200" stroke="#111" stroke-width="1" fill="none"/><circle cx="868" cy="244.500" r="1.300" fill="#111"/>
<!-- connect parallel -->
<rect x="860.500" y="259.500" width="14.500" height="13" fill="#d2d2d2" stroke="#111" stroke-width="1.100"/><rect x="864.500" y="263.300" width="7" height="5.600" fill="#8c8c8c" stroke="#111" stroke-width="1"/>
<!-- connect to support -->
<path d="M861 291.500L870.500 281.500M863.500 292L872 282.500" stroke="#111" stroke-width=".9"/><rect x="867.800" y="288" width="3.700" height="4.300" fill="#fff" stroke="#111" stroke-width=".9"/><circle cx="867" cy="287.300" r="1" fill="#18d818"/>
<!-- connection details -->
<g fill="#ecc070" stroke="#a87820" stroke-width=".7"><path d="M860.300 329H862V328H864.500V329H866V332H860.300Z"/><path d="M863.500 334.500H865.200V333.500H867.700V334.500H869.200V338H863.500Z"/><path d="M863.500 340H865.200V339H867.700V340H869.200V343H863.500Z"/></g>
<path d="M861.500 333V342.500" stroke="#333" stroke-width=".9" stroke-dasharray="1 1"/>
<path d="M870.500 327.500V331.500H868V334.300H876V331.500H873.500V327.500Z" fill="#00c8c8"/><path d="M870.300 327.500V331.300H868M873.700 327.500V331.300H876" fill="none" stroke="#e01020" stroke-width="1"/>
<!-- I beams -->
<defs><g id="ib"><path d="M863.500 0.500H875.500V3H871.500V12.500H875.500V15H863.500V12.500H867.500V3H863.500Z" fill="#e6e6e6" stroke="#111" stroke-width="1.100" stroke-linejoin="round"/></g></defs>
<use href="#ib" y="351"/><rect x="860.300" y="356.800" width="3.400" height="4.600" fill="#8a8a8a" stroke="#111" stroke-width=".9"/>
<use href="#ib" y="373"/><rect x="860" y="378.300" width="7.500" height="5.400" fill="#808080"/><path d="M860 378.300H867.500M860 383.700H867.500" stroke="#111" stroke-width="1"/>
<use href="#ib" y="395"/><rect x="860" y="400.300" width="11.500" height="5.400" fill="#808080"/><path d="M860 400.300H871.500M860 405.700H871.500" stroke="#111" stroke-width="1"/>
<use href="#ib" y="417"/><rect x="860" y="422.300" width="16" height="5.400" fill="#808080"/><path d="M860 422.300H876M860 427.700H876" stroke="#111" stroke-width="1"/>
<use href="#ib" y="439"/><rect x="860" y="444.300" width="9.500" height="5.400" fill="#808080"/><path d="M860 444.300H869.500M860 449.700H869.500M869.500 444.300V449.700" stroke="#111" stroke-width="1"/>
<!-- exterior corner -->
<path d="M860 464H876L870 469.500H860Z" fill="#808080"/><path d="M860 463.800H876.200V479M860 469.600H870L872.300 467.500V479" fill="none" stroke="#111" stroke-width="1.100"/><path d="M872.800 468V479H875.600V465Z" fill="#fff"/>
<!-- interior corner -->
<path d="M860 486H875.500L870 491H860Z" fill="#808080"/><path d="M860 485.800H875.500M860 491.200H870V501M870.500 491L875.500 486M873.600 488.500V501" fill="none" stroke="#111" stroke-width="1.100"/><path d="M870.600 491.500V501H873V489Z" fill="#fff"/>
<!-- connect profile ends -->
<path d="M860.300 511L862.300 509.500L869 516.500L868 519.500Z" fill="#808080" stroke="#333" stroke-width=".6"/><path d="M876 513.700H868.500V520.300H876" fill="#fff" stroke="#111" stroke-width="1.100"/>
<!-- trim to edge of area -->
<rect x="861.500" y="531" width="13.500" height="5.500" fill="#dcdcdc"/><path d="M861.500 531V546.500H875M861.500 536.700H875M864.500 541H875M864.500 543.700H875M864.500 541V543.700" fill="none" stroke="#111" stroke-width="1.100"/>
<!-- trim to edge of angled -->
<path d="M862 556L865 553.500H875.500V556.500L866 565V568.500H864.500V560Z" fill="#e2e2e2"/><path d="M864.800 568.300L876 556V552.800L864.800 564.500Z" fill="#808080" stroke="#222" stroke-width=".7"/><path d="M864.500 553.500L862 556L866 560.500M862 556.200V559.500L864.800 563" fill="none" stroke="#111" stroke-width=".9"/>
<!-- trim to area plane -->
<path d="M862 578L865 575.500H875.500V580L872.500 583H868.500Z" fill="#e2e2e2"/><path d="M868.500 581.500L872.500 579V590.500H868.500Z" fill="#808080" stroke="#222" stroke-width=".7"/><path d="M864.500 575.500L862 578L868 584.500M862 578.200V581.500L868 588.500M875.500 577.500L872.500 580.500" fill="none" stroke="#111" stroke-width=".9"/>
<!-- edit profile joint -->
<path d="M860.500 609.500L863.500 605L874.500 599L876 600.500L867 607.500Z" fill="#d8d8d8" stroke="#333" stroke-width=".6"/><path d="M866 603.500L873.500 599.500L875 601L868.500 605.500Z" fill="#e8e000"/><path d="M860.500 609.500L862.500 606.500L863.800 608Z" fill="#111"/>
<path d="M869.500 607.500H876V609.500H874.500V612H876V614H869.500V612H871V611.500H865V609.500H871V609.500Z" fill="#e6e6e6" stroke="#111" stroke-width="1"/><rect x="865" y="609" width="6" height="3" fill="#808080" stroke="#111" stroke-width=".8"/>
<!-- trims connect -->
<rect x="860.300" y="650.300" width="2.400" height="6.200" fill="#9a9a9a" stroke="#111" stroke-width="1"/>
<path d="M864.300 652.300H866.300V650.300L869.700 653.500L866.300 656.700V654.700H864.300Z" fill="#20e0f0" stroke="#111" stroke-width=".9"/>
<path d="M871.500 661V648H876.300" fill="none" stroke="#111" stroke-width="3.200"/><path d="M872.300 661V648.800H876.300" fill="none" stroke="#f8f000" stroke-width="1.400"/>
<!-- trims edit -->
<rect x="860.300" y="676.300" width="2.400" height="6.200" fill="#9a9a9a" stroke="#111" stroke-width="1"/><path d="M862.700 679.500H873" stroke="#111" stroke-width="1"/><circle cx="867" cy="679.700" r="1.300" fill="#333"/>
<path d="M873.200 675V684M876.200 675V684" stroke="#111" stroke-width="1"/><rect x="873.700" y="675" width="2" height="9" fill="#f8f000"/>
<path d="M866.200 678.600L867.700 675.300L873.200 669.500L875.300 671.400L869.600 677.300Z" fill="#f0e400" stroke="#555" stroke-width=".5"/><path d="M866.200 678.600L867.300 676.200L868.600 677.500Z" fill="#111"/><circle cx="874.500" cy="669.700" r="1.600" fill="#e01020"/>
</svg>

</div>
</div>
<!-- ===== tooltip, cursor, annotation arrows ===== -->
<div class="a" style="left:948px;top:363px;width:211px;height:61px;background:linear-gradient(#ffffff,#e6eaf4);border:1px solid #7a7a7a;border-radius:3px;box-shadow:1px 1px 2px rgba(0,0,0,.25)"></div>
<div class="tt" style="left:962.3px;top:369px;letter-spacing:-0.075px;">Create joints and add joint</div>
<div class="tt" style="left:962.3px;top:382px;letter-spacing:-0.019px;">components between building</div>
<div class="tt" style="left:962.3px;top:395px;letter-spacing:-0.180px;">components. Select a folder in the</div>
<div class="tt" style="left:962.3px;top:408px;letter-spacing:-0.073px;">browser, and double-click a joint.</div>
<svg class="a" style="left:800px;top:60px;overflow:visible" width="80" height="70" viewBox="800 60 80 70"><path d="M814.100 122.600L843.200 90.600L838.800 88.600L859.200 81.800L850.500 100.800L848.500 96.900Z" fill="#ff0a0a" style="filter:drop-shadow(1px 1px 1.500px rgba(0,0,0,.35))"/></svg>
<svg class="a" style="left:980px;top:330px;overflow:visible" width="60" height="45" viewBox="980 330 60 45"><path d="M1024 366.300L1005.100 347.400L1008.400 344.800L987.800 339.800L998.500 357.800L1000.400 355Z" fill="#ff0a0a" style="filter:drop-shadow(1px 1px 1.500px rgba(0,0,0,.35))"/></svg>
<svg class="a" style="left:947px;top:341px" width="16" height="24" viewBox="947 341 16 24"><path d="M948.500 343.800V359.600L952 356.300L954.700 362.200L956.900 361.200L954.300 355.500H959.700Z" fill="#fff" stroke="#111" stroke-width="1" stroke-linejoin="miter"/></svg>
</body></html>
